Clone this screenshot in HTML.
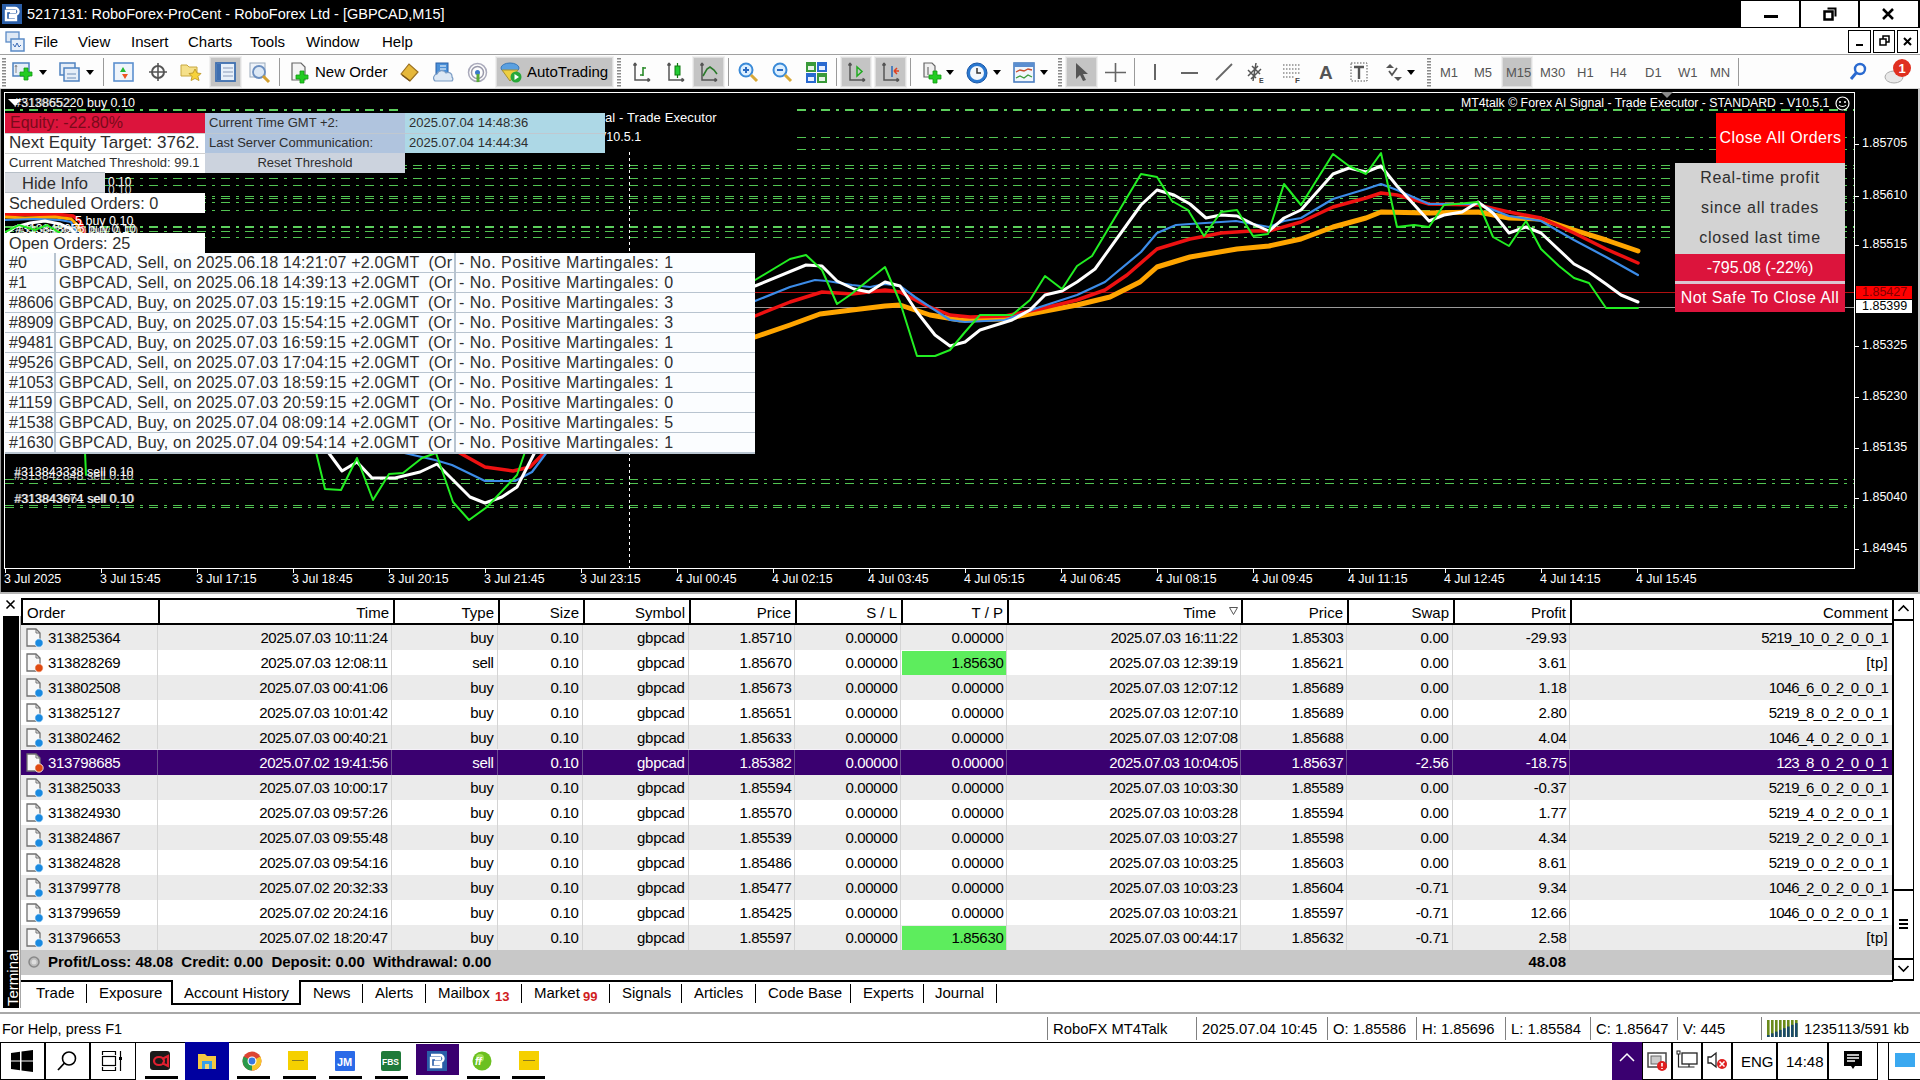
<!DOCTYPE html><html><head><meta charset="utf-8"><style>
*{margin:0;padding:0;box-sizing:border-box}
html,body{width:1920px;height:1080px;overflow:hidden;background:#fff;font-family:"Liberation Sans", sans-serif;}
.a{position:absolute}
.t{position:absolute;white-space:pre;line-height:1}
.r{text-align:right}
.c{text-align:center}
</style></head><body>
<div class="a" style="left:0px;top:0px;width:1920px;height:28px;background:#000;"></div><svg class="a" style="left:2px;top:4px" width="20" height="20" viewBox="0 0 20 20"><rect width="20" height="20" fill="#2a5ea8"/><path d="M4 4h9a3.5 3.5 0 0 1 0 7h-5v2h6v3H4V7h9v1H8" fill="none" stroke="#fff" stroke-width="2.4"/></svg><div class="t" style="left:27px;top:7px;font-size:14.5px;color:#fff;">5217131: RoboForex-ProCent - RoboForex Ltd - [GBPCAD,M15]</div><div class="a" style="left:1741px;top:1px;width:58px;height:26px;background:#fff;"></div><div class="a" style="left:1801px;top:1px;width:57px;height:26px;background:#fff;"></div><div class="a" style="left:1860px;top:1px;width:58px;height:26px;background:#fff;"></div><div class="a" style="left:1764px;top:15px;width:14px;height:3px;background:#000;"></div><svg class="a" style="left:1823px;top:7px" width="14" height="14"><rect x="1.5" y="4.5" width="8" height="8" fill="none" stroke="#000" stroke-width="2.5"/><path d="M4.5 1.5h8v8" fill="none" stroke="#000" stroke-width="2"/></svg><svg class="a" style="left:1881px;top:7px" width="14" height="14"><path d="M2 2L12 12M12 2L2 12" stroke="#000" stroke-width="2.5"/></svg><div class="a" style="left:0px;top:28px;width:1920px;height:26px;background:#fff;"></div><div class="a" style="left:0px;top:54px;width:1920px;height:1px;background:#a0a0a0;"></div><svg class="a" style="left:5px;top:31px" width="22" height="22"><rect x="1" y="1" width="13" height="10" fill="#dfe9f5" stroke="#5a8ac6" stroke-width="1.3"/><rect x="6" y="8" width="13" height="12" fill="#e8f0fa" stroke="#5a8ac6" stroke-width="1.5"/><path d="M8 13l2 3 2-4 2 4 2-2" fill="none" stroke="#3a6ab6" stroke-width="1"/></svg><div class="t" style="left:34px;top:34px;font-size:15px;color:#000;">File</div><div class="t" style="left:78px;top:34px;font-size:15px;color:#000;">View</div><div class="t" style="left:131px;top:34px;font-size:15px;color:#000;">Insert</div><div class="t" style="left:188px;top:34px;font-size:15px;color:#000;">Charts</div><div class="t" style="left:250px;top:34px;font-size:15px;color:#000;">Tools</div><div class="t" style="left:306px;top:34px;font-size:15px;color:#000;">Window</div><div class="t" style="left:382px;top:34px;font-size:15px;color:#000;">Help</div><div class="a" style="left:1848px;top:30px;width:23px;height:23px;background:#fff;border:1px solid #000;"></div><div class="a" style="left:1873px;top:30px;width:22px;height:23px;background:#fff;border:1px solid #000;"></div><div class="a" style="left:1897px;top:30px;width:21px;height:23px;background:#fff;border:1px solid #000;"></div><div class="a" style="left:1856px;top:44px;width:7px;height:2px;background:#000;"></div><svg class="a" style="left:1879px;top:35px" width="12" height="12"><rect x="1" y="4" width="6" height="6" fill="none" stroke="#000" stroke-width="1.5"/><path d="M4 4V1h6v6H7" fill="none" stroke="#000" stroke-width="1.5"/></svg><svg class="a" style="left:1902px;top:36px" width="12" height="12"><path d="M2 2L9 9M9 2L2 9" stroke="#000" stroke-width="2"/></svg><div class="a" style="left:0px;top:55px;width:1920px;height:33px;background:#fdfdfd;"></div><div class="a" style="left:0px;top:88px;width:1920px;height:1px;background:#d8d8d8;"></div><svg class="a" style="left:2px;top:58px" width="4" height="29" viewBox="0 0 4 29"><rect x="0" y="0" width="4" height="1.5" fill="#8a8a8a"/><rect x="0" y="3" width="4" height="1.5" fill="#8a8a8a"/><rect x="0" y="6" width="4" height="1.5" fill="#8a8a8a"/><rect x="0" y="9" width="4" height="1.5" fill="#8a8a8a"/><rect x="0" y="12" width="4" height="1.5" fill="#8a8a8a"/><rect x="0" y="15" width="4" height="1.5" fill="#8a8a8a"/><rect x="0" y="18" width="4" height="1.5" fill="#8a8a8a"/><rect x="0" y="21" width="4" height="1.5" fill="#8a8a8a"/><rect x="0" y="24" width="4" height="1.5" fill="#8a8a8a"/><rect x="0" y="27" width="4" height="1.5" fill="#8a8a8a"/></svg><svg class="a" style="left:12px;top:62px" width="22" height="20" viewBox="0 0 22 20"><rect x="1" y="1" width="16" height="13" fill="#e6eef8" stroke="#4f82c0" stroke-width="1.5"/><path d="M4 4v7M3 5l1-2 1 2" stroke="#888" stroke-width="1" fill="none"/><path d="M12 6h4v4h4v4h-4v4h-4v-4H8v-4h4z" fill="#22cc22" stroke="#119911" stroke-width="0.8"/></svg><svg class="a" style="left:39px;top:70px" width="8" height="5" viewBox="0 0 8 5"><path d="M0 0h8L4 5z" fill="#000"/></svg><svg class="a" style="left:59px;top:62px" width="22" height="20" viewBox="0 0 22 20"><rect x="1" y="1" width="15" height="12" fill="#e6eef8" stroke="#4f82c0" stroke-width="1.5"/><rect x="5" y="6" width="15" height="13" fill="#e6eef8" stroke="#4f82c0" stroke-width="1.5"/><path d="M8 12h9M8 16h9" stroke="#6c8db8" stroke-width="1.2"/></svg><svg class="a" style="left:86px;top:70px" width="8" height="5" viewBox="0 0 8 5"><path d="M0 0h8L4 5z" fill="#000"/></svg><div class="a" style="left:103px;top:58px;width:1px;height:28px;background:#9a9a9a;"></div><svg class="a" style="left:113px;top:62px" width="21" height="20" viewBox="0 0 21 20"><rect x="1" y="1" width="19" height="18" fill="#eef4fb" stroke="#5b8fcf" stroke-width="1.6"/><path d="M7 10l3-5 3 5z" fill="#22bb33"/><path d="M9 12l3 5 3-5z" fill="#ee5522"/></svg><svg class="a" style="left:148px;top:62px" width="20" height="20" viewBox="0 0 20 20"><circle cx="10" cy="10" r="6" fill="none" stroke="#555" stroke-width="2"/><path d="M10 1v18M1 10h18" stroke="#555" stroke-width="1.6"/></svg><svg class="a" style="left:180px;top:62px" width="23" height="20" viewBox="0 0 23 20"><path d="M1 3h6l2 2h8v9H1z" fill="#f5e08a" stroke="#c8a840" stroke-width="1"/><path d="M15 7l2 4 4 .5-3 3 1 4-4-2-4 2 1-4-3-3 4-.5z" fill="#f7d23a" stroke="#b89020" stroke-width="0.8"/></svg><div class="a" style="left:210px;top:57px;width:31px;height:30px;background:#c4c4c4;border:1px solid #dedede;outline:1px solid #f0f0f0;"></div><svg class="a" style="left:215px;top:62px" width="21" height="20" viewBox="0 0 21 20"><rect x="1" y="1" width="19" height="18" fill="#e8f0fa" stroke="#3f6fb0" stroke-width="1.8"/><rect x="2" y="2" width="4" height="16" fill="#3f6fb0"/><path d="M8 6h10M8 10h10M8 14h10" stroke="#8a9ab8" stroke-width="1.2"/></svg><svg class="a" style="left:249px;top:62px" width="23" height="22" viewBox="0 0 23 22"><rect x="1" y="1" width="15" height="14" fill="#eef3f9" stroke="#9ab" stroke-width="1"/><circle cx="10" cy="10" r="6" fill="#dce8f5" stroke="#6b8fc0" stroke-width="1.8"/><path d="M14 14l6 6" stroke="#d4a030" stroke-width="3"/></svg><div class="a" style="left:279px;top:58px;width:1px;height:28px;background:#9a9a9a;"></div><svg class="a" style="left:290px;top:62px" width="21" height="22" viewBox="0 0 21 22"><path d="M2 1h9l4 4v13H2z" fill="#f4f4f4" stroke="#666" stroke-width="1.2"/><path d="M10 9h4v4h4v4h-4v4h-4v-4H6v-4h4z" fill="#22cc22" stroke="#119911" stroke-width="0.8"/></svg><div class="t" style="left:315px;top:64px;font-size:15px;color:#000;">New Order</div><svg class="a" style="left:399px;top:62px" width="21" height="20" viewBox="0 0 21 20"><path d="M2 12l8-10 9 8-8 9z" fill="#e6b83a" stroke="#9a7020" stroke-width="1.2"/><path d="M3 13l8 6" stroke="#7a5518" stroke-width="1.5"/></svg><svg class="a" style="left:433px;top:62px" width="21" height="20" viewBox="0 0 21 20"><rect x="3" y="1" width="12" height="12" fill="#4a90d8" stroke="#2a60a8"/><path d="M7 4h6M7 7h6" stroke="#fff" stroke-width="1.2"/><path d="M2 19a4 4 0 0 1 2-7 5 5 0 0 1 9-1 4 4 0 0 1 6 4 3 3 0 0 1 0 4z" fill="#dde8f4" stroke="#7a9cc4" stroke-width="1.2"/></svg><svg class="a" style="left:467px;top:62px" width="21" height="21" viewBox="0 0 21 21"><circle cx="10.5" cy="10.5" r="9" fill="none" stroke="#aab" stroke-width="1.5"/><circle cx="10.5" cy="10.5" r="6" fill="none" stroke="#99a" stroke-width="1.5"/><circle cx="10.5" cy="10.5" r="2.5" fill="#3a7ac8"/><path d="M11 12v8" stroke="#5aaa3a" stroke-width="3"/></svg><div class="a" style="left:496px;top:57px;width:117px;height:30px;background:#c4c4c4;border:1px solid #dedede;outline:1px solid #f0f0f0;"></div><svg class="a" style="left:500px;top:62px" width="23" height="21" viewBox="0 0 23 21"><ellipse cx="10" cy="6" rx="9" ry="5" fill="#5aa0e0" stroke="#3a78b8"/><path d="M2 8l8 11 8-11z" fill="#eecf40" stroke="#a89030"/><circle cx="16" cy="15" r="5.5" fill="#28a838"/><path d="M14.5 12v6l4.5-3z" fill="#fff"/></svg><div class="t" style="left:527px;top:64px;font-size:15px;color:#000;">AutoTrading</div><svg class="a" style="left:617px;top:58px" width="4" height="29" viewBox="0 0 4 29"><rect x="0" y="0" width="4" height="1.5" fill="#8a8a8a"/><rect x="0" y="3" width="4" height="1.5" fill="#8a8a8a"/><rect x="0" y="6" width="4" height="1.5" fill="#8a8a8a"/><rect x="0" y="9" width="4" height="1.5" fill="#8a8a8a"/><rect x="0" y="12" width="4" height="1.5" fill="#8a8a8a"/><rect x="0" y="15" width="4" height="1.5" fill="#8a8a8a"/><rect x="0" y="18" width="4" height="1.5" fill="#8a8a8a"/><rect x="0" y="21" width="4" height="1.5" fill="#8a8a8a"/><rect x="0" y="24" width="4" height="1.5" fill="#8a8a8a"/><rect x="0" y="27" width="4" height="1.5" fill="#8a8a8a"/></svg><svg class="a" style="left:633px;top:62px" width="18" height="20" viewBox="0 0 18 20"><path d="M2 1v17h15M2 1l-1.5 2.5M2 1l1.5 2.5M17 18l-2.5-1.5M17 18l-2.5 1.5" stroke="#555" stroke-width="1.5" fill="none"/><path d="M10 5v9M10 6h3M7 13h3" stroke="#2a8a2a" stroke-width="1.6" fill="none"/></svg><svg class="a" style="left:667px;top:62px" width="18" height="20" viewBox="0 0 18 20"><path d="M2 1v17h15M2 1l-1.5 2.5M2 1l1.5 2.5M17 18l-2.5-1.5M17 18l-2.5 1.5" stroke="#555" stroke-width="1.5" fill="none"/><rect x="8" y="4" width="5" height="9" fill="#22cc33" stroke="#117711"/><path d="M10.5 1v3M10.5 13v3" stroke="#117711" stroke-width="1.2"/></svg><div class="a" style="left:693px;top:57px;width:31px;height:30px;background:#c4c4c4;border:1px solid #dedede;outline:1px solid #f0f0f0;"></div><svg class="a" style="left:700px;top:62px" width="18" height="20" viewBox="0 0 18 20"><path d="M2 1v17h15M2 1l-1.5 2.5M2 1l1.5 2.5M17 18l-2.5-1.5M17 18l-2.5 1.5" stroke="#555" stroke-width="1.5" fill="none"/><path d="M3 14l4-7 3-2 4 3 3 4" stroke="#2a7a2a" stroke-width="1.6" fill="none"/></svg><div class="a" style="left:728px;top:58px;width:1px;height:28px;background:#9a9a9a;"></div><svg class="a" style="left:738px;top:62px" width="21" height="22" viewBox="0 0 21 22"><circle cx="8" cy="8" r="6.5" fill="#dcefff" stroke="#3a8ad8" stroke-width="2"/><path d="M5 8h6M8 5v6" stroke="#2a6ac0" stroke-width="2"/><path d="M13 13l6 6" stroke="#d8a838" stroke-width="3"/></svg><svg class="a" style="left:772px;top:62px" width="21" height="22" viewBox="0 0 21 22"><circle cx="8" cy="8" r="6.5" fill="#dcefff" stroke="#3a8ad8" stroke-width="2"/><path d="M5 8h6" stroke="#2a6ac0" stroke-width="2"/><path d="M13 13l6 6" stroke="#d8a838" stroke-width="3"/></svg><svg class="a" style="left:806px;top:62px" width="21" height="21" viewBox="0 0 21 21"><rect x="0" y="0" width="10" height="10" fill="#3a9a3a"/><rect x="11" y="0" width="10" height="10" fill="#2a6ad0"/><rect x="0" y="11" width="10" height="10" fill="#2a6ad0"/><rect x="11" y="11" width="10" height="10" fill="#3a9a3a"/><rect x="2" y="4" width="6" height="4" fill="#e8f4e8"/><rect x="13" y="4" width="6" height="4" fill="#e8f0ff"/><rect x="2" y="15" width="6" height="4" fill="#e8f0ff"/><rect x="13" y="15" width="6" height="4" fill="#e8f4e8"/></svg><div class="a" style="left:836px;top:58px;width:1px;height:28px;background:#9a9a9a;"></div><div class="a" style="left:841px;top:57px;width:30px;height:30px;background:#c4c4c4;border:1px solid #dedede;outline:1px solid #f0f0f0;"></div><svg class="a" style="left:848px;top:62px" width="18" height="20" viewBox="0 0 18 20"><path d="M2 1v17h15M2 1l-1.5 2.5M2 1l1.5 2.5M17 18l-2.5-1.5M17 18l-2.5 1.5" stroke="#555" stroke-width="1.5" fill="none"/><path d="M9 5v9l5-4.5z" fill="none" stroke="#22aa22" stroke-width="1.5"/></svg><div class="a" style="left:875px;top:57px;width:31px;height:30px;background:#c4c4c4;border:1px solid #dedede;outline:1px solid #f0f0f0;"></div><svg class="a" style="left:882px;top:62px" width="18" height="20" viewBox="0 0 18 20"><path d="M2 1v17h15M2 1l-1.5 2.5M2 1l1.5 2.5M17 18l-2.5-1.5M17 18l-2.5 1.5" stroke="#555" stroke-width="1.5" fill="none"/><path d="M10 4v11" stroke="#2a6ab8" stroke-width="1.5"/><path d="M17 9h-5M12 9l3-3M12 9l3 3" stroke="#e04020" stroke-width="1.5" fill="none"/></svg><div class="a" style="left:910px;top:58px;width:1px;height:28px;background:#9a9a9a;"></div><svg class="a" style="left:921px;top:62px" width="22" height="23" viewBox="0 0 22 23"><path d="M3 1h8l3 3v11H3z" fill="#f0f0f0" stroke="#666" stroke-width="1.2"/><path d="M7 5v8" stroke="#555"/><path d="M12 9h4v4h4v4h-4v4h-4v-4H8v-4h4z" fill="#22cc22" stroke="#119911" stroke-width="0.8"/></svg><svg class="a" style="left:946px;top:70px" width="8" height="5" viewBox="0 0 8 5"><path d="M0 0h8L4 5z" fill="#000"/></svg><svg class="a" style="left:966px;top:62px" width="22" height="22" viewBox="0 0 22 22"><circle cx="11" cy="11" r="10" fill="#2a78d0" stroke="#1a58a8"/><circle cx="11" cy="11" r="7" fill="#f4f8fc"/><path d="M11 6v5h4" stroke="#333" stroke-width="1.5" fill="none"/></svg><svg class="a" style="left:993px;top:70px" width="8" height="5" viewBox="0 0 8 5"><path d="M0 0h8L4 5z" fill="#000"/></svg><svg class="a" style="left:1013px;top:62px" width="22" height="21" viewBox="0 0 22 21"><rect x="1" y="1" width="20" height="19" fill="#f0f6fc" stroke="#4a7ec0" stroke-width="1.6"/><rect x="1" y="1" width="20" height="4" fill="#5a8ed0"/><path d="M3 10l4-2 4 1 4-2 4 1" stroke="#c84a2a" stroke-width="1.3" fill="none"/><path d="M3 16l4-2 4 2 4-3 4 2" stroke="#3a9a3a" stroke-width="1.3" fill="none"/></svg><svg class="a" style="left:1040px;top:70px" width="8" height="5" viewBox="0 0 8 5"><path d="M0 0h8L4 5z" fill="#000"/></svg><svg class="a" style="left:1058px;top:58px" width="4" height="29" viewBox="0 0 4 29"><rect x="0" y="0" width="4" height="1.5" fill="#8a8a8a"/><rect x="0" y="3" width="4" height="1.5" fill="#8a8a8a"/><rect x="0" y="6" width="4" height="1.5" fill="#8a8a8a"/><rect x="0" y="9" width="4" height="1.5" fill="#8a8a8a"/><rect x="0" y="12" width="4" height="1.5" fill="#8a8a8a"/><rect x="0" y="15" width="4" height="1.5" fill="#8a8a8a"/><rect x="0" y="18" width="4" height="1.5" fill="#8a8a8a"/><rect x="0" y="21" width="4" height="1.5" fill="#8a8a8a"/><rect x="0" y="24" width="4" height="1.5" fill="#8a8a8a"/><rect x="0" y="27" width="4" height="1.5" fill="#8a8a8a"/></svg><div class="a" style="left:1066px;top:57px;width:31px;height:30px;background:#c4c4c4;border:1px solid #dedede;outline:1px solid #f0f0f0;"></div><svg class="a" style="left:1074px;top:62px" width="14" height="20" viewBox="0 0 14 20"><path d="M2 1v16l4-4 3 6 3-1-3-6h5z" fill="#555"/></svg><svg class="a" style="left:1105px;top:63px" width="21" height="19" viewBox="0 0 21 19"><path d="M10.5 0v19M0 9.5h21" stroke="#666" stroke-width="1.6"/></svg><div class="a" style="left:1134px;top:58px;width:1px;height:28px;background:#9a9a9a;"></div><div class="a" style="left:1154px;top:64px;width:2px;height:16px;background:#666;"></div><div class="a" style="left:1181px;top:72px;width:17px;height:2px;background:#666;"></div><svg class="a" style="left:1215px;top:63px" width="18" height="18" viewBox="0 0 18 18"><path d="M1 17L17 1" stroke="#666" stroke-width="1.8"/></svg><svg class="a" style="left:1246px;top:62px" width="20" height="22" viewBox="0 0 20 22"><path d="M2 14l10-10M5 17l10-10M2 8l8 8M6 4l8 8M10 1l-3 18" stroke="#555" stroke-width="1.5" fill="none"/><text x="13" y="21" font-size="7" font-weight="bold" fill="#444" font-family="Liberation Sans">E</text></svg><svg class="a" style="left:1282px;top:62px" width="20" height="22" viewBox="0 0 20 22"><path d="M1 3h17M1 7h17M1 11h17M1 15h12" stroke="#555" stroke-width="1.2" stroke-dasharray="1.5 1.5"/><text x="13" y="21" font-size="8" font-weight="bold" fill="#444" font-family="Liberation Sans">F</text></svg><div class="t" style="left:1319px;top:63px;font-size:19px;color:#555;font-weight:bold;">A</div><svg class="a" style="left:1350px;top:62px" width="18" height="21" viewBox="0 0 18 21"><rect x="1" y="1" width="16" height="18" fill="none" stroke="#555" stroke-dasharray="1.5 1.5"/><path d="M4 5h10M9 5v12" stroke="#555" stroke-width="2.4"/></svg><svg class="a" style="left:1385px;top:62px" width="18" height="21" viewBox="0 0 18 21"><path d="M1 6l4-4 4 4z M9 15l4 4 4-4z" fill="#555"/><path d="M4 9l3 4 5-7" stroke="#555" stroke-width="1.8" fill="none"/></svg><svg class="a" style="left:1407px;top:70px" width="8" height="5" viewBox="0 0 8 5"><path d="M0 0h8L4 5z" fill="#000"/></svg><svg class="a" style="left:1427px;top:58px" width="4" height="29" viewBox="0 0 4 29"><rect x="0" y="0" width="4" height="1.5" fill="#8a8a8a"/><rect x="0" y="3" width="4" height="1.5" fill="#8a8a8a"/><rect x="0" y="6" width="4" height="1.5" fill="#8a8a8a"/><rect x="0" y="9" width="4" height="1.5" fill="#8a8a8a"/><rect x="0" y="12" width="4" height="1.5" fill="#8a8a8a"/><rect x="0" y="15" width="4" height="1.5" fill="#8a8a8a"/><rect x="0" y="18" width="4" height="1.5" fill="#8a8a8a"/><rect x="0" y="21" width="4" height="1.5" fill="#8a8a8a"/><rect x="0" y="24" width="4" height="1.5" fill="#8a8a8a"/><rect x="0" y="27" width="4" height="1.5" fill="#8a8a8a"/></svg><div class="a" style="left:1502px;top:57px;width:30px;height:30px;background:#c4c4c4;border:1px solid #dedede;outline:1px solid #f0f0f0;"></div><div class="t" style="left:1440px;top:66px;font-size:13px;color:#555;">M1</div><div class="t" style="left:1474px;top:66px;font-size:13px;color:#555;">M5</div><div class="t" style="left:1506px;top:66px;font-size:13px;color:#555;">M15</div><div class="t" style="left:1540px;top:66px;font-size:13px;color:#555;">M30</div><div class="t" style="left:1577px;top:66px;font-size:13px;color:#555;">H1</div><div class="t" style="left:1610px;top:66px;font-size:13px;color:#555;">H4</div><div class="t" style="left:1645px;top:66px;font-size:13px;color:#555;">D1</div><div class="t" style="left:1678px;top:66px;font-size:13px;color:#555;">W1</div><div class="t" style="left:1710px;top:66px;font-size:13px;color:#555;">MN</div><div class="a" style="left:1738px;top:58px;width:1px;height:28px;background:#9a9a9a;"></div><svg class="a" style="left:1849px;top:62px" width="18" height="20" viewBox="0 0 18 20"><circle cx="11" cy="7" r="5" fill="none" stroke="#2a6ad0" stroke-width="2.4"/><path d="M7.5 10.5L2 17" stroke="#2a6ad0" stroke-width="3"/></svg><svg class="a" style="left:1883px;top:58px" width="30" height="27" viewBox="0 0 30 27"><ellipse cx="11" cy="19" rx="9" ry="6" fill="#e8e8e8" stroke="#aaa"/><circle cx="19" cy="10" r="9" fill="#e03020"/><text x="15.5" y="15" font-size="13" font-weight="bold" fill="#fff" font-family="Liberation Sans">1</text></svg><div class="a" style="left:0px;top:89px;width:1920px;height:503px;background:#000;"></div><div class="a" style="left:0px;top:89px;width:1px;height:503px;background:#9a9a9a;"></div><div class="a" style="left:1918px;top:89px;width:2px;height:503px;background:#c8c8c8;"></div><div class="a" style="left:0px;top:592px;width:1920px;height:2px;background:#b4b4b4;"></div><div class="a" style="left:4px;top:92px;width:1851px;height:1px;background:#fff;"></div><div class="a" style="left:4px;top:92px;width:1px;height:477px;background:#fff;"></div><div class="a" style="left:1854px;top:92px;width:1px;height:477px;background:#fff;"></div><div class="a" style="left:4px;top:568px;width:1851px;height:1px;background:#fff;"></div><svg class="a" style="left:1661px;top:92px" width="12" height="6" viewBox="0 0 12 6"><path d="M0 0h12L6 6z" fill="#8a8a8a"/></svg><svg class="a" style="left:0;top:0" width="1920" height="600" viewBox="0 0 1920 600"><defs><clipPath id="c797_1854"><rect x="797" y="0" width="1057" height="600"/></clipPath><clipPath id="c5_1854"><rect x="5" y="0" width="1849" height="600"/></clipPath><clipPath id="c5_398"><rect x="5" y="0" width="393" height="600"/></clipPath><clipPath id="frame"><rect x="5" y="93" width="1849" height="475"/></clipPath></defs><g clip-path="url(#frame)"><line x1="5" y1="110.0" x2="398" y2="110.0" stroke="#5ccf5c" stroke-width="2" stroke-dasharray="9 6 3 6" clip-path="url(#c5_398)"/><line x1="797" y1="110.0" x2="1854" y2="110.0" stroke="#5ccf5c" stroke-width="2" stroke-dasharray="9 6 3 6" clip-path="url(#c797_1854)"/><line x1="797" y1="137.5" x2="1854" y2="137.5" stroke="#52c452" stroke-width="1" stroke-dasharray="9 6 3 6" clip-path="url(#c797_1854)"/><line x1="797" y1="149.5" x2="1854" y2="149.5" stroke="#52c452" stroke-width="1" stroke-dasharray="9 6 3 6" clip-path="url(#c797_1854)"/><line x1="5" y1="165.5" x2="1854" y2="165.5" stroke="#52c452" stroke-width="1" stroke-dasharray="9 6 3 6" clip-path="url(#c5_1854)"/><line x1="5" y1="168.5" x2="1854" y2="168.5" stroke="#52c452" stroke-width="1" stroke-dasharray="9 6 3 6" clip-path="url(#c5_1854)"/><line x1="5" y1="178.5" x2="1854" y2="178.5" stroke="#52c452" stroke-width="1" stroke-dasharray="9 6 3 6" clip-path="url(#c5_1854)"/><line x1="5" y1="185.5" x2="1854" y2="185.5" stroke="#52c452" stroke-width="1" stroke-dasharray="9 6 3 6" clip-path="url(#c5_1854)"/><line x1="5" y1="196.5" x2="1854" y2="196.5" stroke="#52c452" stroke-width="1" stroke-dasharray="9 6 3 6" clip-path="url(#c5_1854)"/><line x1="5" y1="198.5" x2="1854" y2="198.5" stroke="#52c452" stroke-width="1" stroke-dasharray="9 6 3 6" clip-path="url(#c5_1854)"/><line x1="5" y1="202.5" x2="1854" y2="202.5" stroke="#52c452" stroke-width="1" stroke-dasharray="9 6 3 6" clip-path="url(#c5_1854)"/><line x1="5" y1="210.5" x2="1854" y2="210.5" stroke="#52c452" stroke-width="1" stroke-dasharray="9 6 3 6" clip-path="url(#c5_1854)"/><line x1="5" y1="231.5" x2="1854" y2="231.5" stroke="#52c452" stroke-width="1" stroke-dasharray="9 6 3 6" clip-path="url(#c5_1854)"/><line x1="5" y1="237.5" x2="1854" y2="237.5" stroke="#52c452" stroke-width="1" stroke-dasharray="9 6 3 6" clip-path="url(#c5_1854)"/><line x1="5" y1="227.0" x2="1854" y2="227.0" stroke="#5ccf5c" stroke-width="2" stroke-dasharray="9 6 3 6" clip-path="url(#c5_1854)"/><line x1="5" y1="479.5" x2="1854" y2="479.5" stroke="#52c452" stroke-width="1" stroke-dasharray="9 6 3 6" clip-path="url(#c5_1854)"/><line x1="5" y1="483.5" x2="1854" y2="483.5" stroke="#52c452" stroke-width="1" stroke-dasharray="9 6 3 6" clip-path="url(#c5_1854)"/><line x1="5" y1="505.5" x2="1854" y2="505.5" stroke="#52c452" stroke-width="1" stroke-dasharray="9 6 3 6" clip-path="url(#c5_1854)"/><line x1="5" y1="507.5" x2="1854" y2="507.5" stroke="#52c452" stroke-width="1" stroke-dasharray="9 6 3 6" clip-path="url(#c5_1854)"/><line x1="5" y1="292.5" x2="1854" y2="292.5" stroke="#b01010" stroke-width="1"/><line x1="5" y1="307.5" x2="1854" y2="307.5" stroke="#9a9a9a" stroke-width="1"/><line x1="629.5" y1="152" x2="629.5" y2="568" stroke="#fff" stroke-width="1" stroke-dasharray="3 3"/><polyline points="755,337 790,325 820,314 852,310 885,306 900,305 930,315 960,320 1005,319 1040,312 1077,305 1110,297 1140,282 1157,267 1190,257 1237,249 1269,246 1301,239 1333,227 1366,218 1381,212 1429,213 1478,212 1509,218 1541,219 1574,230 1606,240 1638,251" fill="none" stroke="#ffa500" stroke-width="5" stroke-linejoin="round" stroke-linecap="round"/><polyline points="755,316 790,302 822,292 852,294 885,290 900,292 925,305 950,315 970,317 1005,316 1040,309 1077,300 1105,290 1127,275 1157,249 1190,239 1206,236 1221,233 1251,231 1269,231 1301,222 1333,207 1366,198 1381,193 1397,195 1429,204 1478,205 1509,212 1541,218 1574,233 1606,249 1638,263" fill="none" stroke="#ee1111" stroke-width="3.5" stroke-linejoin="round" stroke-linecap="round"/><polyline points="458,452 485,467 513,471 530,467 545,452" fill="none" stroke="#ee1111" stroke-width="3.5" stroke-linejoin="round" stroke-linecap="round"/><polyline points="755,301 790,287 815,280 827,281 852,285 870,287 885,284 900,286 915,297 950,320 965,322 1005,320 1040,307 1077,295 1105,282 1141,252 1157,233 1176,225 1190,224 1236,221 1269,227 1284,221 1301,218 1333,199 1366,189 1381,184 1397,190 1429,204 1478,204 1509,216 1541,221 1574,240 1606,257 1638,275" fill="none" stroke="#3c8ce8" stroke-width="2.2" stroke-linejoin="round" stroke-linecap="round"/><polyline points="400,452 435,460 452,465 485,481 515,481 532,472 547,452" fill="none" stroke="#3c8ce8" stroke-width="2.2" stroke-linejoin="round" stroke-linecap="round"/><polyline points="755,286 806,265 822,266 837,281 854,289 869,292 885,282 900,286 917,312 935,335 950,346 965,342 980,330 1012,320 1030,310 1045,295 1062,291 1077,282 1095,269 1141,205 1157,190 1174,195 1190,204 1206,218 1221,215 1237,216 1253,224 1269,231 1284,218 1301,210 1333,174 1349,168 1366,172 1381,166 1397,186 1429,221 1444,215 1462,212 1478,202 1493,213 1509,233 1526,227 1541,233 1574,264 1589,272 1606,284 1621,295 1638,302" fill="none" stroke="#ffffff" stroke-width="3" stroke-linejoin="round" stroke-linecap="round"/><polyline points="328,452 342,471 357,462 372,478 395,478 420,472 437,464 470,497 485,503 502,497 517,487 535,452" fill="none" stroke="#ffffff" stroke-width="3" stroke-linejoin="round" stroke-linecap="round"/><polyline points="755,280 790,259 806,255 822,270 837,304 850,295 885,267 900,302 917,356 935,356 950,350 965,332 980,315 1012,315 1030,300 1045,276 1062,289 1077,266 1092,256 1141,174 1157,177 1172,201 1188,210 1204,236 1221,212 1237,210 1253,236 1268,234 1284,184 1301,205 1333,154 1349,166 1366,174 1381,153 1397,227 1414,225 1429,227 1444,205 1478,202 1493,237 1509,246 1526,221 1541,249 1559,266 1574,278 1589,283 1606,308 1638,308" fill="none" stroke="#22ee22" stroke-width="2" stroke-linejoin="round" stroke-linecap="round"/><polyline points="316,452 325,489 341,490 357,458 373,500 389,474 403,473 422,458 436,453 453,502 469,520 487,507 517,475 525,452" fill="none" stroke="#22ee22" stroke-width="2" stroke-linejoin="round" stroke-linecap="round"/><polyline points="85,452 86,475" fill="none" stroke="#22ee22" stroke-width="2" stroke-linejoin="round" stroke-linecap="round"/></g></svg><div class="a" style="left:1855px;top:144px;width:4px;height:1px;background:#fff;"></div><div class="t" style="left:1862px;top:137px;font-size:12.5px;color:#fff;">1.85705</div><div class="a" style="left:1855px;top:196px;width:4px;height:1px;background:#fff;"></div><div class="t" style="left:1862px;top:189px;font-size:12.5px;color:#fff;">1.85610</div><div class="a" style="left:1855px;top:245px;width:4px;height:1px;background:#fff;"></div><div class="t" style="left:1862px;top:238px;font-size:12.5px;color:#fff;">1.85515</div><div class="a" style="left:1855px;top:346px;width:4px;height:1px;background:#fff;"></div><div class="t" style="left:1862px;top:339px;font-size:12.5px;color:#fff;">1.85325</div><div class="a" style="left:1855px;top:397px;width:4px;height:1px;background:#fff;"></div><div class="t" style="left:1862px;top:390px;font-size:12.5px;color:#fff;">1.85230</div><div class="a" style="left:1855px;top:448px;width:4px;height:1px;background:#fff;"></div><div class="t" style="left:1862px;top:441px;font-size:12.5px;color:#fff;">1.85135</div><div class="a" style="left:1855px;top:498px;width:4px;height:1px;background:#fff;"></div><div class="t" style="left:1862px;top:491px;font-size:12.5px;color:#fff;">1.85040</div><div class="a" style="left:1855px;top:549px;width:4px;height:1px;background:#fff;"></div><div class="t" style="left:1862px;top:542px;font-size:12.5px;color:#fff;">1.84945</div><div class="a" style="left:1856px;top:286px;width:56px;height:13px;background:#ff0000;"></div><div class="t" style="left:1862px;top:286px;font-size:12.5px;color:#800000;">1.85427</div><div class="a" style="left:1856px;top:300px;width:56px;height:13px;background:#fff;"></div><div class="t" style="left:1862px;top:300px;font-size:12.5px;color:#000;">1.85399</div><div class="a" style="left:5px;top:569px;width:1px;height:4px;background:#fff;"></div><div class="t" style="left:4px;top:573px;font-size:12.4px;color:#fff;">3 Jul 2025</div><div class="a" style="left:101px;top:569px;width:1px;height:4px;background:#fff;"></div><div class="t" style="left:100px;top:573px;font-size:12.4px;color:#fff;">3 Jul 15:45</div><div class="a" style="left:197px;top:569px;width:1px;height:4px;background:#fff;"></div><div class="t" style="left:196px;top:573px;font-size:12.4px;color:#fff;">3 Jul 17:15</div><div class="a" style="left:293px;top:569px;width:1px;height:4px;background:#fff;"></div><div class="t" style="left:292px;top:573px;font-size:12.4px;color:#fff;">3 Jul 18:45</div><div class="a" style="left:389px;top:569px;width:1px;height:4px;background:#fff;"></div><div class="t" style="left:388px;top:573px;font-size:12.4px;color:#fff;">3 Jul 20:15</div><div class="a" style="left:485px;top:569px;width:1px;height:4px;background:#fff;"></div><div class="t" style="left:484px;top:573px;font-size:12.4px;color:#fff;">3 Jul 21:45</div><div class="a" style="left:581px;top:569px;width:1px;height:4px;background:#fff;"></div><div class="t" style="left:580px;top:573px;font-size:12.4px;color:#fff;">3 Jul 23:15</div><div class="a" style="left:677px;top:569px;width:1px;height:4px;background:#fff;"></div><div class="t" style="left:676px;top:573px;font-size:12.4px;color:#fff;">4 Jul 00:45</div><div class="a" style="left:773px;top:569px;width:1px;height:4px;background:#fff;"></div><div class="t" style="left:772px;top:573px;font-size:12.4px;color:#fff;">4 Jul 02:15</div><div class="a" style="left:869px;top:569px;width:1px;height:4px;background:#fff;"></div><div class="t" style="left:868px;top:573px;font-size:12.4px;color:#fff;">4 Jul 03:45</div><div class="a" style="left:965px;top:569px;width:1px;height:4px;background:#fff;"></div><div class="t" style="left:964px;top:573px;font-size:12.4px;color:#fff;">4 Jul 05:15</div><div class="a" style="left:1061px;top:569px;width:1px;height:4px;background:#fff;"></div><div class="t" style="left:1060px;top:573px;font-size:12.4px;color:#fff;">4 Jul 06:45</div><div class="a" style="left:1157px;top:569px;width:1px;height:4px;background:#fff;"></div><div class="t" style="left:1156px;top:573px;font-size:12.4px;color:#fff;">4 Jul 08:15</div><div class="a" style="left:1253px;top:569px;width:1px;height:4px;background:#fff;"></div><div class="t" style="left:1252px;top:573px;font-size:12.4px;color:#fff;">4 Jul 09:45</div><div class="a" style="left:1349px;top:569px;width:1px;height:4px;background:#fff;"></div><div class="t" style="left:1348px;top:573px;font-size:12.4px;color:#fff;">4 Jul 11:15</div><div class="a" style="left:1445px;top:569px;width:1px;height:4px;background:#fff;"></div><div class="t" style="left:1444px;top:573px;font-size:12.4px;color:#fff;">4 Jul 12:45</div><div class="a" style="left:1541px;top:569px;width:1px;height:4px;background:#fff;"></div><div class="t" style="left:1540px;top:573px;font-size:12.4px;color:#fff;">4 Jul 14:15</div><div class="a" style="left:1637px;top:569px;width:1px;height:4px;background:#fff;"></div><div class="t" style="left:1636px;top:573px;font-size:12.4px;color:#fff;">4 Jul 15:45</div><div class="t" style="left:1461px;top:97px;font-size:12.3px;color:#fff;">MT4talk © Forex AI Signal - Trade Executor - STANDARD - V10.5.1</div><svg class="a" style="left:1835px;top:96px" width="15" height="15" viewBox="0 0 15 15"><circle cx="7.5" cy="7.5" r="6.5" fill="none" stroke="#fff" stroke-width="1.2"/><circle cx="5" cy="6" r="1" fill="#fff"/><circle cx="10" cy="6" r="1" fill="#fff"/><path d="M4 9a4 3 0 0 0 7 0" fill="none" stroke="#fff" stroke-width="1.1"/></svg><div class="t" style="left:605px;top:111px;font-size:13px;color:#fff;letter-spacing:0.1px;">al - Trade Executor</div><div class="t" style="left:598px;top:131px;font-size:12.5px;color:#fff;">V10.5.1</div><div class="t" style="left:14px;top:466px;font-size:12.5px;color:#fff;">#313843338 sell 0.10</div><div class="t" style="left:14px;top:470px;font-size:12.5px;color:#eee;opacity:0.85;">#313842848 sell 0.10</div><div class="t" style="left:14px;top:493px;font-size:12.5px;color:#fff;">#313843674 sell 0.10</div><div class="t" style="left:15px;top:493px;font-size:12.5px;color:#eee;opacity:0.7;">#313843961 sell 0.10</div><svg class="a" style="left:8px;top:99px" width="14" height="7" viewBox="0 0 14 7"><path d="M0 0h14L7 7z" fill="#fff"/></svg><div class="t" style="left:14px;top:97px;font-size:12.5px;color:#fff;">#313865220 buy 0.10</div><div class="t" style="left:22px;top:97px;font-size:12.5px;color:#ddd;opacity:0.6;">5108552</div><div class="t" style="left:5px;top:113px;width:200px;height:20px;background:#dc143c;font-size:16px;color:#7a0a1a;line-height:20px;padding-left:5px;text-align:left;overflow:hidden;">Equity: -22.80%</div><div class="t" style="left:5px;top:133px;width:200px;height:20px;background:#fff;font-size:17px;color:#2e2e2e;line-height:20px;padding-left:4px;text-align:left;overflow:hidden;">Next Equity Target: 3762.</div><div class="t" style="left:5px;top:153px;width:200px;height:20px;background:#fff;font-size:13px;color:#2e2e2e;line-height:20px;padding-left:4px;text-align:left;overflow:hidden;">Current Matched Threshold: 99.1</div><div class="t" style="left:205px;top:113px;width:200px;height:20px;background:#b0c4de;font-size:13px;color:#2e2e2e;line-height:20px;padding-left:4px;text-align:left;overflow:hidden;">Current Time GMT +2:</div><div class="t" style="left:205px;top:133px;width:200px;height:20px;background:#b0c4de;font-size:13px;color:#2e2e2e;line-height:20px;padding-left:4px;text-align:left;overflow:hidden;">Last Server Communication:</div><div class="t" style="left:205px;top:153px;width:200px;height:20px;background:#ccd3de;font-size:13px;color:#2e2e2e;line-height:20px;padding-left:0px;text-align:center;overflow:hidden;">Reset Threshold</div><div class="t" style="left:405px;top:113px;width:200px;height:20px;background:#add8e6;font-size:13px;color:#2e2e2e;line-height:20px;padding-left:4px;text-align:left;overflow:hidden;">2025.07.04 14:48:36</div><div class="t" style="left:405px;top:133px;width:200px;height:20px;background:#add8e6;font-size:13px;color:#2e2e2e;line-height:20px;padding-left:4px;text-align:left;overflow:hidden;">2025.07.04 14:44:34</div><div class="a" style="left:205px;top:133px;width:400px;height:1px;background:#c0c8d0;"></div><div class="a" style="left:5px;top:133px;width:200px;height:1px;background:#d0d0d0;"></div><div class="a" style="left:5px;top:153px;width:200px;height:1px;background:#d0d0d0;"></div><div class="t" style="left:5px;top:173px;width:100px;height:20px;background:#d9dce2;font-size:16.5px;color:#2e2e2e;line-height:20px;padding-left:0px;text-align:center;overflow:hidden;">Hide Info</div><div class="a" style="left:5px;top:172px;width:100px;height:1px;background:#b8c0c8;"></div><div class="a" style="left:5px;top:192px;width:100px;height:1px;background:#b8c0c8;"></div><div class="t" style="left:5px;top:193px;width:200px;height:20px;background:#fff;font-size:16.3px;color:#2e2e2e;line-height:20px;padding-left:4px;text-align:left;overflow:hidden;">Scheduled Orders: 0</div><div class="t" style="left:5px;top:233px;width:200px;height:20px;background:#fff;font-size:16.3px;color:#2e2e2e;line-height:20px;padding-left:4px;text-align:left;overflow:hidden;">Open Orders: 25</div><svg class="a" style="left:5px;top:213px" width="140" height="20" viewBox="0 0 140 20"><defs><clipPath id="rb"><rect x="0" y="0" width="140" height="20"/></clipPath></defs><g clip-path="url(#rb)"><line x1="0" y1="14.5" x2="140" y2="14.5" stroke="#52c452" stroke-dasharray="9 6 3 6"/><line x1="0" y1="18.5" x2="140" y2="18.5" stroke="#52c452" stroke-dasharray="9 6 3 6"/><polyline points="0,1.5 55,1.5 68,3 75,8 80,20" fill="none" stroke="#ee1111" stroke-width="3.5"/><polyline points="0,4 20,5 50,4 66,6 72,12 76,20" fill="none" stroke="#ffa500" stroke-width="3"/><polyline points="0,7 30,6 55,7 66,9 72,20" fill="none" stroke="#3c8ce8" stroke-width="2.2"/><text x="10" y="20" font-size="12.5" fill="#fff" font-family="Liberation Sans">#313848655 buy 0.10</text><text x="12" y="22" font-size="12.5" fill="#eee" font-family="Liberation Sans" opacity="0.8">#313843920 buy 0.10</text><polyline points="2,20 10,14 25,10 40,8 55,11 66,16 70,20" fill="none" stroke="#fff" stroke-width="3"/><polyline points="0,19 14,12 30,17 42,12 55,20" fill="none" stroke="#22ee22" stroke-width="2"/><text x="70" y="12" font-size="12.5" fill="#fff" font-family="Liberation Sans">5 buy 0.10</text></g></svg><div class="t" style="left:108px;top:176px;font-size:12px;color:#fff;">0.10</div><div class="t" style="left:108px;top:184px;font-size:12px;color:#ddd;">0.10</div><div class="a" style="left:5px;top:253px;width:750px;height:20px;background:#fbfdff;"></div><div class="t" style="left:5px;top:253px;width:50px;height:20px;background:#fbfdff;font-size:16px;color:#2e2e2e;line-height:20px;padding-left:4px;text-align:left;overflow:hidden;">#0</div><div class="t" style="left:55px;top:253px;width:400px;height:20px;background:#fbfdff;font-size:16px;color:#2e2e2e;line-height:20px;padding-left:4px;text-align:left;overflow:hidden;letter-spacing:0.18px;">GBPCAD, Sell, on 2025.06.18 14:21:07 +2.0GMT  (Or</div><div class="t" style="left:455px;top:253px;width:300px;height:20px;background:#fbfdff;font-size:16px;color:#2e2e2e;line-height:20px;padding-left:4px;text-align:left;overflow:hidden;letter-spacing:0.5px;">- No. Positive Martingales: 1</div><div class="a" style="left:5px;top:272px;width:750px;height:2px;background:#b8c4d0;"></div><div class="a" style="left:54px;top:253px;width:2px;height:20px;background:#b8c4d0;"></div><div class="a" style="left:454px;top:253px;width:2px;height:20px;background:#b8c4d0;"></div><div class="a" style="left:5px;top:273px;width:750px;height:20px;background:#fbfdff;"></div><div class="t" style="left:5px;top:273px;width:50px;height:20px;background:#fbfdff;font-size:16px;color:#2e2e2e;line-height:20px;padding-left:4px;text-align:left;overflow:hidden;">#1</div><div class="t" style="left:55px;top:273px;width:400px;height:20px;background:#fbfdff;font-size:16px;color:#2e2e2e;line-height:20px;padding-left:4px;text-align:left;overflow:hidden;letter-spacing:0.18px;">GBPCAD, Sell, on 2025.06.18 14:39:13 +2.0GMT  (Or</div><div class="t" style="left:455px;top:273px;width:300px;height:20px;background:#fbfdff;font-size:16px;color:#2e2e2e;line-height:20px;padding-left:4px;text-align:left;overflow:hidden;letter-spacing:0.5px;">- No. Positive Martingales: 0</div><div class="a" style="left:5px;top:292px;width:750px;height:2px;background:#b8c4d0;"></div><div class="a" style="left:54px;top:273px;width:2px;height:20px;background:#b8c4d0;"></div><div class="a" style="left:454px;top:273px;width:2px;height:20px;background:#b8c4d0;"></div><div class="a" style="left:5px;top:293px;width:750px;height:20px;background:#fbfdff;"></div><div class="t" style="left:5px;top:293px;width:50px;height:20px;background:#fbfdff;font-size:16px;color:#2e2e2e;line-height:20px;padding-left:4px;text-align:left;overflow:hidden;">#8606</div><div class="t" style="left:55px;top:293px;width:400px;height:20px;background:#fbfdff;font-size:16px;color:#2e2e2e;line-height:20px;padding-left:4px;text-align:left;overflow:hidden;letter-spacing:0.18px;">GBPCAD, Buy, on 2025.07.03 15:19:15 +2.0GMT  (Or</div><div class="t" style="left:455px;top:293px;width:300px;height:20px;background:#fbfdff;font-size:16px;color:#2e2e2e;line-height:20px;padding-left:4px;text-align:left;overflow:hidden;letter-spacing:0.5px;">- No. Positive Martingales: 3</div><div class="a" style="left:5px;top:312px;width:750px;height:2px;background:#b8c4d0;"></div><div class="a" style="left:54px;top:293px;width:2px;height:20px;background:#b8c4d0;"></div><div class="a" style="left:454px;top:293px;width:2px;height:20px;background:#b8c4d0;"></div><div class="a" style="left:5px;top:313px;width:750px;height:20px;background:#fbfdff;"></div><div class="t" style="left:5px;top:313px;width:50px;height:20px;background:#fbfdff;font-size:16px;color:#2e2e2e;line-height:20px;padding-left:4px;text-align:left;overflow:hidden;">#8909</div><div class="t" style="left:55px;top:313px;width:400px;height:20px;background:#fbfdff;font-size:16px;color:#2e2e2e;line-height:20px;padding-left:4px;text-align:left;overflow:hidden;letter-spacing:0.18px;">GBPCAD, Buy, on 2025.07.03 15:54:15 +2.0GMT  (Or</div><div class="t" style="left:455px;top:313px;width:300px;height:20px;background:#fbfdff;font-size:16px;color:#2e2e2e;line-height:20px;padding-left:4px;text-align:left;overflow:hidden;letter-spacing:0.5px;">- No. Positive Martingales: 3</div><div class="a" style="left:5px;top:332px;width:750px;height:2px;background:#b8c4d0;"></div><div class="a" style="left:54px;top:313px;width:2px;height:20px;background:#b8c4d0;"></div><div class="a" style="left:454px;top:313px;width:2px;height:20px;background:#b8c4d0;"></div><div class="a" style="left:5px;top:333px;width:750px;height:20px;background:#fbfdff;"></div><div class="t" style="left:5px;top:333px;width:50px;height:20px;background:#fbfdff;font-size:16px;color:#2e2e2e;line-height:20px;padding-left:4px;text-align:left;overflow:hidden;">#9481</div><div class="t" style="left:55px;top:333px;width:400px;height:20px;background:#fbfdff;font-size:16px;color:#2e2e2e;line-height:20px;padding-left:4px;text-align:left;overflow:hidden;letter-spacing:0.18px;">GBPCAD, Buy, on 2025.07.03 16:59:15 +2.0GMT  (Or</div><div class="t" style="left:455px;top:333px;width:300px;height:20px;background:#fbfdff;font-size:16px;color:#2e2e2e;line-height:20px;padding-left:4px;text-align:left;overflow:hidden;letter-spacing:0.5px;">- No. Positive Martingales: 1</div><div class="a" style="left:5px;top:352px;width:750px;height:2px;background:#b8c4d0;"></div><div class="a" style="left:54px;top:333px;width:2px;height:20px;background:#b8c4d0;"></div><div class="a" style="left:454px;top:333px;width:2px;height:20px;background:#b8c4d0;"></div><div class="a" style="left:5px;top:353px;width:750px;height:20px;background:#fbfdff;"></div><div class="t" style="left:5px;top:353px;width:50px;height:20px;background:#fbfdff;font-size:16px;color:#2e2e2e;line-height:20px;padding-left:4px;text-align:left;overflow:hidden;">#9526</div><div class="t" style="left:55px;top:353px;width:400px;height:20px;background:#fbfdff;font-size:16px;color:#2e2e2e;line-height:20px;padding-left:4px;text-align:left;overflow:hidden;letter-spacing:0.18px;">GBPCAD, Sell, on 2025.07.03 17:04:15 +2.0GMT  (Or</div><div class="t" style="left:455px;top:353px;width:300px;height:20px;background:#fbfdff;font-size:16px;color:#2e2e2e;line-height:20px;padding-left:4px;text-align:left;overflow:hidden;letter-spacing:0.5px;">- No. Positive Martingales: 0</div><div class="a" style="left:5px;top:372px;width:750px;height:2px;background:#b8c4d0;"></div><div class="a" style="left:54px;top:353px;width:2px;height:20px;background:#b8c4d0;"></div><div class="a" style="left:454px;top:353px;width:2px;height:20px;background:#b8c4d0;"></div><div class="a" style="left:5px;top:373px;width:750px;height:20px;background:#fbfdff;"></div><div class="t" style="left:5px;top:373px;width:50px;height:20px;background:#fbfdff;font-size:16px;color:#2e2e2e;line-height:20px;padding-left:4px;text-align:left;overflow:hidden;">#1053</div><div class="t" style="left:55px;top:373px;width:400px;height:20px;background:#fbfdff;font-size:16px;color:#2e2e2e;line-height:20px;padding-left:4px;text-align:left;overflow:hidden;letter-spacing:0.18px;">GBPCAD, Sell, on 2025.07.03 18:59:15 +2.0GMT  (Or</div><div class="t" style="left:455px;top:373px;width:300px;height:20px;background:#fbfdff;font-size:16px;color:#2e2e2e;line-height:20px;padding-left:4px;text-align:left;overflow:hidden;letter-spacing:0.5px;">- No. Positive Martingales: 1</div><div class="a" style="left:5px;top:392px;width:750px;height:2px;background:#b8c4d0;"></div><div class="a" style="left:54px;top:373px;width:2px;height:20px;background:#b8c4d0;"></div><div class="a" style="left:454px;top:373px;width:2px;height:20px;background:#b8c4d0;"></div><div class="a" style="left:5px;top:393px;width:750px;height:20px;background:#fbfdff;"></div><div class="t" style="left:5px;top:393px;width:50px;height:20px;background:#fbfdff;font-size:16px;color:#2e2e2e;line-height:20px;padding-left:4px;text-align:left;overflow:hidden;">#1159</div><div class="t" style="left:55px;top:393px;width:400px;height:20px;background:#fbfdff;font-size:16px;color:#2e2e2e;line-height:20px;padding-left:4px;text-align:left;overflow:hidden;letter-spacing:0.18px;">GBPCAD, Sell, on 2025.07.03 20:59:15 +2.0GMT  (Or</div><div class="t" style="left:455px;top:393px;width:300px;height:20px;background:#fbfdff;font-size:16px;color:#2e2e2e;line-height:20px;padding-left:4px;text-align:left;overflow:hidden;letter-spacing:0.5px;">- No. Positive Martingales: 0</div><div class="a" style="left:5px;top:412px;width:750px;height:2px;background:#b8c4d0;"></div><div class="a" style="left:54px;top:393px;width:2px;height:20px;background:#b8c4d0;"></div><div class="a" style="left:454px;top:393px;width:2px;height:20px;background:#b8c4d0;"></div><div class="a" style="left:5px;top:413px;width:750px;height:20px;background:#fbfdff;"></div><div class="t" style="left:5px;top:413px;width:50px;height:20px;background:#fbfdff;font-size:16px;color:#2e2e2e;line-height:20px;padding-left:4px;text-align:left;overflow:hidden;">#1538</div><div class="t" style="left:55px;top:413px;width:400px;height:20px;background:#fbfdff;font-size:16px;color:#2e2e2e;line-height:20px;padding-left:4px;text-align:left;overflow:hidden;letter-spacing:0.18px;">GBPCAD, Buy, on 2025.07.04 08:09:14 +2.0GMT  (Or</div><div class="t" style="left:455px;top:413px;width:300px;height:20px;background:#fbfdff;font-size:16px;color:#2e2e2e;line-height:20px;padding-left:4px;text-align:left;overflow:hidden;letter-spacing:0.5px;">- No. Positive Martingales: 5</div><div class="a" style="left:5px;top:432px;width:750px;height:2px;background:#b8c4d0;"></div><div class="a" style="left:54px;top:413px;width:2px;height:20px;background:#b8c4d0;"></div><div class="a" style="left:454px;top:413px;width:2px;height:20px;background:#b8c4d0;"></div><div class="a" style="left:5px;top:433px;width:750px;height:20px;background:#fbfdff;"></div><div class="t" style="left:5px;top:433px;width:50px;height:20px;background:#fbfdff;font-size:16px;color:#2e2e2e;line-height:20px;padding-left:4px;text-align:left;overflow:hidden;">#1630</div><div class="t" style="left:55px;top:433px;width:400px;height:20px;background:#fbfdff;font-size:16px;color:#2e2e2e;line-height:20px;padding-left:4px;text-align:left;overflow:hidden;letter-spacing:0.18px;">GBPCAD, Buy, on 2025.07.04 09:54:14 +2.0GMT  (Or</div><div class="t" style="left:455px;top:433px;width:300px;height:20px;background:#fbfdff;font-size:16px;color:#2e2e2e;line-height:20px;padding-left:4px;text-align:left;overflow:hidden;letter-spacing:0.5px;">- No. Positive Martingales: 1</div><div class="a" style="left:5px;top:452px;width:750px;height:2px;background:#b8c4d0;"></div><div class="a" style="left:54px;top:433px;width:2px;height:20px;background:#b8c4d0;"></div><div class="a" style="left:454px;top:433px;width:2px;height:20px;background:#b8c4d0;"></div><div class="t" style="left:1716px;top:113px;width:129px;height:50px;background:#ff0000;font-size:16px;color:#fff;line-height:50px;padding-left:0px;text-align:center;overflow:hidden;letter-spacing:0.4px;">Close All Orders</div><div class="a" style="left:1675px;top:163px;width:170px;height:91px;background:#d3d3d3;"></div><div class="t" style="left:1675px;top:163px;width:170px;height:30px;background:#d3d3d3;font-size:16px;color:#2e2e2e;line-height:30px;padding-left:0px;text-align:center;overflow:hidden;letter-spacing:0.7px;">Real-time profit</div><div class="t" style="left:1675px;top:193px;width:170px;height:30px;background:#d3d3d3;font-size:16px;color:#2e2e2e;line-height:30px;padding-left:0px;text-align:center;overflow:hidden;letter-spacing:0.7px;">since all trades</div><div class="t" style="left:1675px;top:223px;width:170px;height:30px;background:#d3d3d3;font-size:16px;color:#2e2e2e;line-height:30px;padding-left:0px;text-align:center;overflow:hidden;letter-spacing:0.7px;">closed last time</div><div class="t" style="left:1675px;top:254px;width:170px;height:27px;background:#dc143c;font-size:16px;color:#fff;line-height:27px;padding-left:0px;text-align:center;overflow:hidden;">-795.08 (-22%)</div><div class="a" style="left:1675px;top:281px;width:170px;height:3px;background:#dcc4d0;"></div><div class="t" style="left:1675px;top:284px;width:170px;height:28px;background:#dc143c;font-size:16px;color:#fff;line-height:28px;padding-left:0px;text-align:center;overflow:hidden;letter-spacing:0.4px;">Not Safe To Close All</div><svg class="a" style="left:5px;top:599px" width="11" height="11" viewBox="0 0 11 11"><path d="M1.5 1.5L9.5 9.5M9.5 1.5L1.5 9.5" stroke="#000" stroke-width="1.6"/></svg><div class="a" style="left:3px;top:616px;width:16px;height:392px;background:#000;"></div><div class="a" style="left:20px;top:616px;width:1px;height:392px;background:#a8a8a8;"></div><div class="t" style="left:4.5px;top:1006px;width:60px;height:16px;font-size:15px;color:#fff;line-height:16px;transform:rotate(-90deg);transform-origin:0 0;">Terminal</div><div class="a" style="left:21px;top:598px;width:1873px;height:27px;background:#000;"></div><div class="a" style="left:23px;top:600px;width:135px;height:23px;background:#fff;"></div><div class="a" style="left:160px;top:600px;width:233px;height:23px;background:#fff;"></div><div class="a" style="left:395px;top:600px;width:103px;height:23px;background:#fff;"></div><div class="a" style="left:500px;top:600px;width:83px;height:23px;background:#fff;"></div><div class="a" style="left:585px;top:600px;width:104px;height:23px;background:#fff;"></div><div class="a" style="left:691px;top:600px;width:104px;height:23px;background:#fff;"></div><div class="a" style="left:797px;top:600px;width:104px;height:23px;background:#fff;"></div><div class="a" style="left:903px;top:600px;width:104px;height:23px;background:#fff;"></div><div class="a" style="left:1009px;top:600px;width:232px;height:23px;background:#fff;"></div><div class="a" style="left:1243px;top:600px;width:104px;height:23px;background:#fff;"></div><div class="a" style="left:1349px;top:600px;width:104px;height:23px;background:#fff;"></div><div class="a" style="left:1455px;top:600px;width:115px;height:23px;background:#fff;"></div><div class="a" style="left:1572px;top:600px;width:320px;height:23px;background:#fff;"></div><div class="t" style="left:27px;top:605px;font-size:15px;color:#000;">Order</div><div class="t" style="left:158px;top:605px;font-size:15px;color:#000;width:231px;text-align:right;">Time</div><div class="t" style="left:393px;top:605px;font-size:15px;color:#000;width:101px;text-align:right;">Type</div><div class="t" style="left:498px;top:605px;font-size:15px;color:#000;width:81px;text-align:right;">Size</div><div class="t" style="left:583px;top:605px;font-size:15px;color:#000;width:102px;text-align:right;">Symbol</div><div class="t" style="left:689px;top:605px;font-size:15px;color:#000;width:102px;text-align:right;">Price</div><div class="t" style="left:795px;top:605px;font-size:15px;color:#000;width:102px;text-align:right;">S / L</div><div class="t" style="left:901px;top:605px;font-size:15px;color:#000;width:102px;text-align:right;">T / P</div><div class="t" style="left:1007px;top:605px;font-size:15px;color:#000;width:209px;text-align:right;">Time</div><svg class="a" style="left:1229px;top:607px" width="9" height="8" viewBox="0 0 9 8"><path d="M0.5 0.5h8L4.5 7.5z" fill="none" stroke="#555" stroke-width="1"/></svg><div class="t" style="left:1241px;top:605px;font-size:15px;color:#000;width:102px;text-align:right;">Price</div><div class="t" style="left:1347px;top:605px;font-size:15px;color:#000;width:102px;text-align:right;">Swap</div><div class="t" style="left:1453px;top:605px;font-size:15px;color:#000;width:113px;text-align:right;">Profit</div><div class="t" style="left:1570px;top:605px;font-size:15px;color:#000;width:318px;text-align:right;">Comment</div><div class="a" style="left:21px;top:625px;width:1872px;height:325px;background:#fff;"></div><div class="a" style="left:21px;top:625px;width:1872px;height:25px;background:#ebebeb;"></div><div class="a" style="left:21px;top:650px;width:1872px;height:1px;background:#cfcfcf;"></div><div class="a" style="left:157px;top:625px;width:1px;height:25px;background:#d4d4d4;"></div><div class="a" style="left:391px;top:625px;width:1px;height:25px;background:#d4d4d4;"></div><div class="a" style="left:497px;top:625px;width:1px;height:25px;background:#d4d4d4;"></div><div class="a" style="left:582px;top:625px;width:1px;height:25px;background:#d4d4d4;"></div><div class="a" style="left:688px;top:625px;width:1px;height:25px;background:#d4d4d4;"></div><div class="a" style="left:794px;top:625px;width:1px;height:25px;background:#d4d4d4;"></div><div class="a" style="left:900px;top:625px;width:1px;height:25px;background:#d4d4d4;"></div><div class="a" style="left:1006px;top:625px;width:1px;height:25px;background:#d4d4d4;"></div><div class="a" style="left:1240px;top:625px;width:1px;height:25px;background:#d4d4d4;"></div><div class="a" style="left:1346px;top:625px;width:1px;height:25px;background:#d4d4d4;"></div><div class="a" style="left:1452px;top:625px;width:1px;height:25px;background:#d4d4d4;"></div><div class="a" style="left:1569px;top:625px;width:1px;height:25px;background:#d4d4d4;"></div><svg class="a" style="left:24px;top:628px" width="20" height="20" viewBox="0 0 20 20"><path d="M3 1h9l4 4v13H3z" fill="#f8f8f8" stroke="#707070" stroke-width="1.3"/><path d="M12 1v4h4" fill="none" stroke="#707070" stroke-width="1"/><circle cx="15" cy="15" r="4.2" fill="#1a8ae0" stroke="#fff" stroke-width="0.8"/></svg><div class="t" style="left:48px;top:630px;font-size:15px;color:#000;letter-spacing:-0.3px;">313825364</div><div class="t" style="left:187px;top:630px;font-size:15px;color:#000;width:200.5px;text-align:right;letter-spacing:-0.5px;">2025.07.03 10:11:24</div><div class="t" style="left:293px;top:630px;font-size:15px;color:#000;width:200.5px;text-align:right;letter-spacing:-0.3px;">buy</div><div class="t" style="left:378px;top:630px;font-size:15px;color:#000;width:200.5px;text-align:right;letter-spacing:-0.3px;">0.10</div><div class="t" style="left:484px;top:630px;font-size:15px;color:#000;width:200.5px;text-align:right;letter-spacing:-0.3px;">gbpcad</div><div class="t" style="left:591px;top:630px;font-size:15px;color:#000;width:200.5px;text-align:right;letter-spacing:-0.3px;">1.85710</div><div class="t" style="left:697px;top:630px;font-size:15px;color:#000;width:200.5px;text-align:right;letter-spacing:-0.3px;">0.00000</div><div class="t" style="left:803px;top:630px;font-size:15px;color:#000;width:200.5px;text-align:right;letter-spacing:-0.3px;">0.00000</div><div class="t" style="left:1037px;top:630px;font-size:15px;color:#000;width:200.5px;text-align:right;letter-spacing:-0.5px;">2025.07.03 16:11:22</div><div class="t" style="left:1143px;top:630px;font-size:15px;color:#000;width:200.5px;text-align:right;letter-spacing:-0.3px;">1.85303</div><div class="t" style="left:1248px;top:630px;font-size:15px;color:#000;width:200.5px;text-align:right;letter-spacing:-0.3px;">0.00</div><div class="t" style="left:1366px;top:630px;font-size:15px;color:#000;width:200.5px;text-align:right;letter-spacing:-0.3px;">-29.93</div><div class="t" style="left:1687px;top:630px;font-size:15px;color:#000;width:200.9px;text-align:right;letter-spacing:-0.9px;">5219_10_0_2_0_0_1</div><div class="a" style="left:21px;top:650px;width:1872px;height:25px;background:#fff;"></div><div class="a" style="left:21px;top:675px;width:1872px;height:1px;background:#cfcfcf;"></div><div class="a" style="left:157px;top:650px;width:1px;height:25px;background:#d4d4d4;"></div><div class="a" style="left:391px;top:650px;width:1px;height:25px;background:#d4d4d4;"></div><div class="a" style="left:497px;top:650px;width:1px;height:25px;background:#d4d4d4;"></div><div class="a" style="left:582px;top:650px;width:1px;height:25px;background:#d4d4d4;"></div><div class="a" style="left:688px;top:650px;width:1px;height:25px;background:#d4d4d4;"></div><div class="a" style="left:794px;top:650px;width:1px;height:25px;background:#d4d4d4;"></div><div class="a" style="left:900px;top:650px;width:1px;height:25px;background:#d4d4d4;"></div><div class="a" style="left:1006px;top:650px;width:1px;height:25px;background:#d4d4d4;"></div><div class="a" style="left:1240px;top:650px;width:1px;height:25px;background:#d4d4d4;"></div><div class="a" style="left:1346px;top:650px;width:1px;height:25px;background:#d4d4d4;"></div><div class="a" style="left:1452px;top:650px;width:1px;height:25px;background:#d4d4d4;"></div><div class="a" style="left:1569px;top:650px;width:1px;height:25px;background:#d4d4d4;"></div><div class="a" style="left:902px;top:651px;width:104px;height:24px;background:#5ded5d;"></div><svg class="a" style="left:24px;top:653px" width="20" height="20" viewBox="0 0 20 20"><path d="M3 1h9l4 4v13H3z" fill="#f8f8f8" stroke="#707070" stroke-width="1.3"/><path d="M12 1v4h4" fill="none" stroke="#707070" stroke-width="1"/><circle cx="15" cy="15" r="4.2" fill="#e04a10" stroke="#fff" stroke-width="0.8"/></svg><div class="t" style="left:48px;top:655px;font-size:15px;color:#000;letter-spacing:-0.3px;">313828269</div><div class="t" style="left:187px;top:655px;font-size:15px;color:#000;width:200.5px;text-align:right;letter-spacing:-0.5px;">2025.07.03 12:08:11</div><div class="t" style="left:293px;top:655px;font-size:15px;color:#000;width:200.5px;text-align:right;letter-spacing:-0.3px;">sell</div><div class="t" style="left:378px;top:655px;font-size:15px;color:#000;width:200.5px;text-align:right;letter-spacing:-0.3px;">0.10</div><div class="t" style="left:484px;top:655px;font-size:15px;color:#000;width:200.5px;text-align:right;letter-spacing:-0.3px;">gbpcad</div><div class="t" style="left:591px;top:655px;font-size:15px;color:#000;width:200.5px;text-align:right;letter-spacing:-0.3px;">1.85670</div><div class="t" style="left:697px;top:655px;font-size:15px;color:#000;width:200.5px;text-align:right;letter-spacing:-0.3px;">0.00000</div><div class="t" style="left:803px;top:655px;font-size:15px;color:#000;width:200.5px;text-align:right;letter-spacing:-0.3px;">1.85630</div><div class="t" style="left:1037px;top:655px;font-size:15px;color:#000;width:200.5px;text-align:right;letter-spacing:-0.5px;">2025.07.03 12:39:19</div><div class="t" style="left:1143px;top:655px;font-size:15px;color:#000;width:200.5px;text-align:right;letter-spacing:-0.3px;">1.85621</div><div class="t" style="left:1248px;top:655px;font-size:15px;color:#000;width:200.5px;text-align:right;letter-spacing:-0.3px;">0.00</div><div class="t" style="left:1366px;top:655px;font-size:15px;color:#000;width:200.5px;text-align:right;letter-spacing:-0.3px;">3.61</div><div class="t" style="left:1687px;top:655px;font-size:15px;color:#000;width:200.9px;text-align:right;letter-spacing:0.2px;">[tp]</div><div class="a" style="left:21px;top:675px;width:1872px;height:25px;background:#ebebeb;"></div><div class="a" style="left:21px;top:700px;width:1872px;height:1px;background:#cfcfcf;"></div><div class="a" style="left:157px;top:675px;width:1px;height:25px;background:#d4d4d4;"></div><div class="a" style="left:391px;top:675px;width:1px;height:25px;background:#d4d4d4;"></div><div class="a" style="left:497px;top:675px;width:1px;height:25px;background:#d4d4d4;"></div><div class="a" style="left:582px;top:675px;width:1px;height:25px;background:#d4d4d4;"></div><div class="a" style="left:688px;top:675px;width:1px;height:25px;background:#d4d4d4;"></div><div class="a" style="left:794px;top:675px;width:1px;height:25px;background:#d4d4d4;"></div><div class="a" style="left:900px;top:675px;width:1px;height:25px;background:#d4d4d4;"></div><div class="a" style="left:1006px;top:675px;width:1px;height:25px;background:#d4d4d4;"></div><div class="a" style="left:1240px;top:675px;width:1px;height:25px;background:#d4d4d4;"></div><div class="a" style="left:1346px;top:675px;width:1px;height:25px;background:#d4d4d4;"></div><div class="a" style="left:1452px;top:675px;width:1px;height:25px;background:#d4d4d4;"></div><div class="a" style="left:1569px;top:675px;width:1px;height:25px;background:#d4d4d4;"></div><svg class="a" style="left:24px;top:678px" width="20" height="20" viewBox="0 0 20 20"><path d="M3 1h9l4 4v13H3z" fill="#f8f8f8" stroke="#707070" stroke-width="1.3"/><path d="M12 1v4h4" fill="none" stroke="#707070" stroke-width="1"/><circle cx="15" cy="15" r="4.2" fill="#1a8ae0" stroke="#fff" stroke-width="0.8"/></svg><div class="t" style="left:48px;top:680px;font-size:15px;color:#000;letter-spacing:-0.3px;">313802508</div><div class="t" style="left:187px;top:680px;font-size:15px;color:#000;width:200.5px;text-align:right;letter-spacing:-0.5px;">2025.07.03 00:41:06</div><div class="t" style="left:293px;top:680px;font-size:15px;color:#000;width:200.5px;text-align:right;letter-spacing:-0.3px;">buy</div><div class="t" style="left:378px;top:680px;font-size:15px;color:#000;width:200.5px;text-align:right;letter-spacing:-0.3px;">0.10</div><div class="t" style="left:484px;top:680px;font-size:15px;color:#000;width:200.5px;text-align:right;letter-spacing:-0.3px;">gbpcad</div><div class="t" style="left:591px;top:680px;font-size:15px;color:#000;width:200.5px;text-align:right;letter-spacing:-0.3px;">1.85673</div><div class="t" style="left:697px;top:680px;font-size:15px;color:#000;width:200.5px;text-align:right;letter-spacing:-0.3px;">0.00000</div><div class="t" style="left:803px;top:680px;font-size:15px;color:#000;width:200.5px;text-align:right;letter-spacing:-0.3px;">0.00000</div><div class="t" style="left:1037px;top:680px;font-size:15px;color:#000;width:200.5px;text-align:right;letter-spacing:-0.5px;">2025.07.03 12:07:12</div><div class="t" style="left:1143px;top:680px;font-size:15px;color:#000;width:200.5px;text-align:right;letter-spacing:-0.3px;">1.85689</div><div class="t" style="left:1248px;top:680px;font-size:15px;color:#000;width:200.5px;text-align:right;letter-spacing:-0.3px;">0.00</div><div class="t" style="left:1366px;top:680px;font-size:15px;color:#000;width:200.5px;text-align:right;letter-spacing:-0.3px;">1.18</div><div class="t" style="left:1687px;top:680px;font-size:15px;color:#000;width:200.9px;text-align:right;letter-spacing:-0.9px;">1046_6_0_2_0_0_1</div><div class="a" style="left:21px;top:700px;width:1872px;height:25px;background:#fff;"></div><div class="a" style="left:21px;top:725px;width:1872px;height:1px;background:#cfcfcf;"></div><div class="a" style="left:157px;top:700px;width:1px;height:25px;background:#d4d4d4;"></div><div class="a" style="left:391px;top:700px;width:1px;height:25px;background:#d4d4d4;"></div><div class="a" style="left:497px;top:700px;width:1px;height:25px;background:#d4d4d4;"></div><div class="a" style="left:582px;top:700px;width:1px;height:25px;background:#d4d4d4;"></div><div class="a" style="left:688px;top:700px;width:1px;height:25px;background:#d4d4d4;"></div><div class="a" style="left:794px;top:700px;width:1px;height:25px;background:#d4d4d4;"></div><div class="a" style="left:900px;top:700px;width:1px;height:25px;background:#d4d4d4;"></div><div class="a" style="left:1006px;top:700px;width:1px;height:25px;background:#d4d4d4;"></div><div class="a" style="left:1240px;top:700px;width:1px;height:25px;background:#d4d4d4;"></div><div class="a" style="left:1346px;top:700px;width:1px;height:25px;background:#d4d4d4;"></div><div class="a" style="left:1452px;top:700px;width:1px;height:25px;background:#d4d4d4;"></div><div class="a" style="left:1569px;top:700px;width:1px;height:25px;background:#d4d4d4;"></div><svg class="a" style="left:24px;top:703px" width="20" height="20" viewBox="0 0 20 20"><path d="M3 1h9l4 4v13H3z" fill="#f8f8f8" stroke="#707070" stroke-width="1.3"/><path d="M12 1v4h4" fill="none" stroke="#707070" stroke-width="1"/><circle cx="15" cy="15" r="4.2" fill="#1a8ae0" stroke="#fff" stroke-width="0.8"/></svg><div class="t" style="left:48px;top:705px;font-size:15px;color:#000;letter-spacing:-0.3px;">313825127</div><div class="t" style="left:187px;top:705px;font-size:15px;color:#000;width:200.5px;text-align:right;letter-spacing:-0.5px;">2025.07.03 10:01:42</div><div class="t" style="left:293px;top:705px;font-size:15px;color:#000;width:200.5px;text-align:right;letter-spacing:-0.3px;">buy</div><div class="t" style="left:378px;top:705px;font-size:15px;color:#000;width:200.5px;text-align:right;letter-spacing:-0.3px;">0.10</div><div class="t" style="left:484px;top:705px;font-size:15px;color:#000;width:200.5px;text-align:right;letter-spacing:-0.3px;">gbpcad</div><div class="t" style="left:591px;top:705px;font-size:15px;color:#000;width:200.5px;text-align:right;letter-spacing:-0.3px;">1.85651</div><div class="t" style="left:697px;top:705px;font-size:15px;color:#000;width:200.5px;text-align:right;letter-spacing:-0.3px;">0.00000</div><div class="t" style="left:803px;top:705px;font-size:15px;color:#000;width:200.5px;text-align:right;letter-spacing:-0.3px;">0.00000</div><div class="t" style="left:1037px;top:705px;font-size:15px;color:#000;width:200.5px;text-align:right;letter-spacing:-0.5px;">2025.07.03 12:07:10</div><div class="t" style="left:1143px;top:705px;font-size:15px;color:#000;width:200.5px;text-align:right;letter-spacing:-0.3px;">1.85689</div><div class="t" style="left:1248px;top:705px;font-size:15px;color:#000;width:200.5px;text-align:right;letter-spacing:-0.3px;">0.00</div><div class="t" style="left:1366px;top:705px;font-size:15px;color:#000;width:200.5px;text-align:right;letter-spacing:-0.3px;">2.80</div><div class="t" style="left:1687px;top:705px;font-size:15px;color:#000;width:200.9px;text-align:right;letter-spacing:-0.9px;">5219_8_0_2_0_0_1</div><div class="a" style="left:21px;top:725px;width:1872px;height:25px;background:#ebebeb;"></div><div class="a" style="left:21px;top:750px;width:1872px;height:1px;background:#cfcfcf;"></div><div class="a" style="left:157px;top:725px;width:1px;height:25px;background:#d4d4d4;"></div><div class="a" style="left:391px;top:725px;width:1px;height:25px;background:#d4d4d4;"></div><div class="a" style="left:497px;top:725px;width:1px;height:25px;background:#d4d4d4;"></div><div class="a" style="left:582px;top:725px;width:1px;height:25px;background:#d4d4d4;"></div><div class="a" style="left:688px;top:725px;width:1px;height:25px;background:#d4d4d4;"></div><div class="a" style="left:794px;top:725px;width:1px;height:25px;background:#d4d4d4;"></div><div class="a" style="left:900px;top:725px;width:1px;height:25px;background:#d4d4d4;"></div><div class="a" style="left:1006px;top:725px;width:1px;height:25px;background:#d4d4d4;"></div><div class="a" style="left:1240px;top:725px;width:1px;height:25px;background:#d4d4d4;"></div><div class="a" style="left:1346px;top:725px;width:1px;height:25px;background:#d4d4d4;"></div><div class="a" style="left:1452px;top:725px;width:1px;height:25px;background:#d4d4d4;"></div><div class="a" style="left:1569px;top:725px;width:1px;height:25px;background:#d4d4d4;"></div><svg class="a" style="left:24px;top:728px" width="20" height="20" viewBox="0 0 20 20"><path d="M3 1h9l4 4v13H3z" fill="#f8f8f8" stroke="#707070" stroke-width="1.3"/><path d="M12 1v4h4" fill="none" stroke="#707070" stroke-width="1"/><circle cx="15" cy="15" r="4.2" fill="#1a8ae0" stroke="#fff" stroke-width="0.8"/></svg><div class="t" style="left:48px;top:730px;font-size:15px;color:#000;letter-spacing:-0.3px;">313802462</div><div class="t" style="left:187px;top:730px;font-size:15px;color:#000;width:200.5px;text-align:right;letter-spacing:-0.5px;">2025.07.03 00:40:21</div><div class="t" style="left:293px;top:730px;font-size:15px;color:#000;width:200.5px;text-align:right;letter-spacing:-0.3px;">buy</div><div class="t" style="left:378px;top:730px;font-size:15px;color:#000;width:200.5px;text-align:right;letter-spacing:-0.3px;">0.10</div><div class="t" style="left:484px;top:730px;font-size:15px;color:#000;width:200.5px;text-align:right;letter-spacing:-0.3px;">gbpcad</div><div class="t" style="left:591px;top:730px;font-size:15px;color:#000;width:200.5px;text-align:right;letter-spacing:-0.3px;">1.85633</div><div class="t" style="left:697px;top:730px;font-size:15px;color:#000;width:200.5px;text-align:right;letter-spacing:-0.3px;">0.00000</div><div class="t" style="left:803px;top:730px;font-size:15px;color:#000;width:200.5px;text-align:right;letter-spacing:-0.3px;">0.00000</div><div class="t" style="left:1037px;top:730px;font-size:15px;color:#000;width:200.5px;text-align:right;letter-spacing:-0.5px;">2025.07.03 12:07:08</div><div class="t" style="left:1143px;top:730px;font-size:15px;color:#000;width:200.5px;text-align:right;letter-spacing:-0.3px;">1.85688</div><div class="t" style="left:1248px;top:730px;font-size:15px;color:#000;width:200.5px;text-align:right;letter-spacing:-0.3px;">0.00</div><div class="t" style="left:1366px;top:730px;font-size:15px;color:#000;width:200.5px;text-align:right;letter-spacing:-0.3px;">4.04</div><div class="t" style="left:1687px;top:730px;font-size:15px;color:#000;width:200.9px;text-align:right;letter-spacing:-0.9px;">1046_4_0_2_0_0_1</div><div class="a" style="left:21px;top:750px;width:1872px;height:25px;background:#3a0070;"></div><div class="a" style="left:21px;top:749px;width:1872px;height:1px;background:#f4f0f8;"></div><div class="a" style="left:157px;top:750px;width:1px;height:25px;background:#6a4a90;"></div><div class="a" style="left:391px;top:750px;width:1px;height:25px;background:#6a4a90;"></div><div class="a" style="left:497px;top:750px;width:1px;height:25px;background:#6a4a90;"></div><div class="a" style="left:582px;top:750px;width:1px;height:25px;background:#6a4a90;"></div><div class="a" style="left:688px;top:750px;width:1px;height:25px;background:#6a4a90;"></div><div class="a" style="left:794px;top:750px;width:1px;height:25px;background:#6a4a90;"></div><div class="a" style="left:900px;top:750px;width:1px;height:25px;background:#6a4a90;"></div><div class="a" style="left:1006px;top:750px;width:1px;height:25px;background:#6a4a90;"></div><div class="a" style="left:1240px;top:750px;width:1px;height:25px;background:#6a4a90;"></div><div class="a" style="left:1346px;top:750px;width:1px;height:25px;background:#6a4a90;"></div><div class="a" style="left:1452px;top:750px;width:1px;height:25px;background:#6a4a90;"></div><div class="a" style="left:1569px;top:750px;width:1px;height:25px;background:#6a4a90;"></div><svg class="a" style="left:24px;top:753px" width="20" height="20" viewBox="0 0 20 20"><path d="M3 1h9l4 4v13H3z" fill="#f8f8f8" stroke="#707070" stroke-width="1.3"/><path d="M12 1v4h4" fill="none" stroke="#707070" stroke-width="1"/><circle cx="15" cy="15" r="4.2" fill="#e04a10" stroke="#fff" stroke-width="0.8"/></svg><div class="t" style="left:48px;top:755px;font-size:15px;color:#fff;letter-spacing:-0.3px;">313798685</div><div class="t" style="left:187px;top:755px;font-size:15px;color:#fff;width:200.5px;text-align:right;letter-spacing:-0.5px;">2025.07.02 19:41:56</div><div class="t" style="left:293px;top:755px;font-size:15px;color:#fff;width:200.5px;text-align:right;letter-spacing:-0.3px;">sell</div><div class="t" style="left:378px;top:755px;font-size:15px;color:#fff;width:200.5px;text-align:right;letter-spacing:-0.3px;">0.10</div><div class="t" style="left:484px;top:755px;font-size:15px;color:#fff;width:200.5px;text-align:right;letter-spacing:-0.3px;">gbpcad</div><div class="t" style="left:591px;top:755px;font-size:15px;color:#fff;width:200.5px;text-align:right;letter-spacing:-0.3px;">1.85382</div><div class="t" style="left:697px;top:755px;font-size:15px;color:#fff;width:200.5px;text-align:right;letter-spacing:-0.3px;">0.00000</div><div class="t" style="left:803px;top:755px;font-size:15px;color:#fff;width:200.5px;text-align:right;letter-spacing:-0.3px;">0.00000</div><div class="t" style="left:1037px;top:755px;font-size:15px;color:#fff;width:200.5px;text-align:right;letter-spacing:-0.5px;">2025.07.03 10:04:05</div><div class="t" style="left:1143px;top:755px;font-size:15px;color:#fff;width:200.5px;text-align:right;letter-spacing:-0.3px;">1.85637</div><div class="t" style="left:1248px;top:755px;font-size:15px;color:#fff;width:200.5px;text-align:right;letter-spacing:-0.3px;">-2.56</div><div class="t" style="left:1366px;top:755px;font-size:15px;color:#fff;width:200.5px;text-align:right;letter-spacing:-0.3px;">-18.75</div><div class="t" style="left:1687px;top:755px;font-size:15px;color:#fff;width:200.9px;text-align:right;letter-spacing:-0.9px;">123_8_0_2_0_0_1</div><div class="a" style="left:21px;top:775px;width:1872px;height:25px;background:#ebebeb;"></div><div class="a" style="left:21px;top:800px;width:1872px;height:1px;background:#cfcfcf;"></div><div class="a" style="left:157px;top:775px;width:1px;height:25px;background:#d4d4d4;"></div><div class="a" style="left:391px;top:775px;width:1px;height:25px;background:#d4d4d4;"></div><div class="a" style="left:497px;top:775px;width:1px;height:25px;background:#d4d4d4;"></div><div class="a" style="left:582px;top:775px;width:1px;height:25px;background:#d4d4d4;"></div><div class="a" style="left:688px;top:775px;width:1px;height:25px;background:#d4d4d4;"></div><div class="a" style="left:794px;top:775px;width:1px;height:25px;background:#d4d4d4;"></div><div class="a" style="left:900px;top:775px;width:1px;height:25px;background:#d4d4d4;"></div><div class="a" style="left:1006px;top:775px;width:1px;height:25px;background:#d4d4d4;"></div><div class="a" style="left:1240px;top:775px;width:1px;height:25px;background:#d4d4d4;"></div><div class="a" style="left:1346px;top:775px;width:1px;height:25px;background:#d4d4d4;"></div><div class="a" style="left:1452px;top:775px;width:1px;height:25px;background:#d4d4d4;"></div><div class="a" style="left:1569px;top:775px;width:1px;height:25px;background:#d4d4d4;"></div><svg class="a" style="left:24px;top:778px" width="20" height="20" viewBox="0 0 20 20"><path d="M3 1h9l4 4v13H3z" fill="#f8f8f8" stroke="#707070" stroke-width="1.3"/><path d="M12 1v4h4" fill="none" stroke="#707070" stroke-width="1"/><circle cx="15" cy="15" r="4.2" fill="#1a8ae0" stroke="#fff" stroke-width="0.8"/></svg><div class="t" style="left:48px;top:780px;font-size:15px;color:#000;letter-spacing:-0.3px;">313825033</div><div class="t" style="left:187px;top:780px;font-size:15px;color:#000;width:200.5px;text-align:right;letter-spacing:-0.5px;">2025.07.03 10:00:17</div><div class="t" style="left:293px;top:780px;font-size:15px;color:#000;width:200.5px;text-align:right;letter-spacing:-0.3px;">buy</div><div class="t" style="left:378px;top:780px;font-size:15px;color:#000;width:200.5px;text-align:right;letter-spacing:-0.3px;">0.10</div><div class="t" style="left:484px;top:780px;font-size:15px;color:#000;width:200.5px;text-align:right;letter-spacing:-0.3px;">gbpcad</div><div class="t" style="left:591px;top:780px;font-size:15px;color:#000;width:200.5px;text-align:right;letter-spacing:-0.3px;">1.85594</div><div class="t" style="left:697px;top:780px;font-size:15px;color:#000;width:200.5px;text-align:right;letter-spacing:-0.3px;">0.00000</div><div class="t" style="left:803px;top:780px;font-size:15px;color:#000;width:200.5px;text-align:right;letter-spacing:-0.3px;">0.00000</div><div class="t" style="left:1037px;top:780px;font-size:15px;color:#000;width:200.5px;text-align:right;letter-spacing:-0.5px;">2025.07.03 10:03:30</div><div class="t" style="left:1143px;top:780px;font-size:15px;color:#000;width:200.5px;text-align:right;letter-spacing:-0.3px;">1.85589</div><div class="t" style="left:1248px;top:780px;font-size:15px;color:#000;width:200.5px;text-align:right;letter-spacing:-0.3px;">0.00</div><div class="t" style="left:1366px;top:780px;font-size:15px;color:#000;width:200.5px;text-align:right;letter-spacing:-0.3px;">-0.37</div><div class="t" style="left:1687px;top:780px;font-size:15px;color:#000;width:200.9px;text-align:right;letter-spacing:-0.9px;">5219_6_0_2_0_0_1</div><div class="a" style="left:21px;top:800px;width:1872px;height:25px;background:#fff;"></div><div class="a" style="left:21px;top:825px;width:1872px;height:1px;background:#cfcfcf;"></div><div class="a" style="left:157px;top:800px;width:1px;height:25px;background:#d4d4d4;"></div><div class="a" style="left:391px;top:800px;width:1px;height:25px;background:#d4d4d4;"></div><div class="a" style="left:497px;top:800px;width:1px;height:25px;background:#d4d4d4;"></div><div class="a" style="left:582px;top:800px;width:1px;height:25px;background:#d4d4d4;"></div><div class="a" style="left:688px;top:800px;width:1px;height:25px;background:#d4d4d4;"></div><div class="a" style="left:794px;top:800px;width:1px;height:25px;background:#d4d4d4;"></div><div class="a" style="left:900px;top:800px;width:1px;height:25px;background:#d4d4d4;"></div><div class="a" style="left:1006px;top:800px;width:1px;height:25px;background:#d4d4d4;"></div><div class="a" style="left:1240px;top:800px;width:1px;height:25px;background:#d4d4d4;"></div><div class="a" style="left:1346px;top:800px;width:1px;height:25px;background:#d4d4d4;"></div><div class="a" style="left:1452px;top:800px;width:1px;height:25px;background:#d4d4d4;"></div><div class="a" style="left:1569px;top:800px;width:1px;height:25px;background:#d4d4d4;"></div><svg class="a" style="left:24px;top:803px" width="20" height="20" viewBox="0 0 20 20"><path d="M3 1h9l4 4v13H3z" fill="#f8f8f8" stroke="#707070" stroke-width="1.3"/><path d="M12 1v4h4" fill="none" stroke="#707070" stroke-width="1"/><circle cx="15" cy="15" r="4.2" fill="#1a8ae0" stroke="#fff" stroke-width="0.8"/></svg><div class="t" style="left:48px;top:805px;font-size:15px;color:#000;letter-spacing:-0.3px;">313824930</div><div class="t" style="left:187px;top:805px;font-size:15px;color:#000;width:200.5px;text-align:right;letter-spacing:-0.5px;">2025.07.03 09:57:26</div><div class="t" style="left:293px;top:805px;font-size:15px;color:#000;width:200.5px;text-align:right;letter-spacing:-0.3px;">buy</div><div class="t" style="left:378px;top:805px;font-size:15px;color:#000;width:200.5px;text-align:right;letter-spacing:-0.3px;">0.10</div><div class="t" style="left:484px;top:805px;font-size:15px;color:#000;width:200.5px;text-align:right;letter-spacing:-0.3px;">gbpcad</div><div class="t" style="left:591px;top:805px;font-size:15px;color:#000;width:200.5px;text-align:right;letter-spacing:-0.3px;">1.85570</div><div class="t" style="left:697px;top:805px;font-size:15px;color:#000;width:200.5px;text-align:right;letter-spacing:-0.3px;">0.00000</div><div class="t" style="left:803px;top:805px;font-size:15px;color:#000;width:200.5px;text-align:right;letter-spacing:-0.3px;">0.00000</div><div class="t" style="left:1037px;top:805px;font-size:15px;color:#000;width:200.5px;text-align:right;letter-spacing:-0.5px;">2025.07.03 10:03:28</div><div class="t" style="left:1143px;top:805px;font-size:15px;color:#000;width:200.5px;text-align:right;letter-spacing:-0.3px;">1.85594</div><div class="t" style="left:1248px;top:805px;font-size:15px;color:#000;width:200.5px;text-align:right;letter-spacing:-0.3px;">0.00</div><div class="t" style="left:1366px;top:805px;font-size:15px;color:#000;width:200.5px;text-align:right;letter-spacing:-0.3px;">1.77</div><div class="t" style="left:1687px;top:805px;font-size:15px;color:#000;width:200.9px;text-align:right;letter-spacing:-0.9px;">5219_4_0_2_0_0_1</div><div class="a" style="left:21px;top:825px;width:1872px;height:25px;background:#ebebeb;"></div><div class="a" style="left:21px;top:850px;width:1872px;height:1px;background:#cfcfcf;"></div><div class="a" style="left:157px;top:825px;width:1px;height:25px;background:#d4d4d4;"></div><div class="a" style="left:391px;top:825px;width:1px;height:25px;background:#d4d4d4;"></div><div class="a" style="left:497px;top:825px;width:1px;height:25px;background:#d4d4d4;"></div><div class="a" style="left:582px;top:825px;width:1px;height:25px;background:#d4d4d4;"></div><div class="a" style="left:688px;top:825px;width:1px;height:25px;background:#d4d4d4;"></div><div class="a" style="left:794px;top:825px;width:1px;height:25px;background:#d4d4d4;"></div><div class="a" style="left:900px;top:825px;width:1px;height:25px;background:#d4d4d4;"></div><div class="a" style="left:1006px;top:825px;width:1px;height:25px;background:#d4d4d4;"></div><div class="a" style="left:1240px;top:825px;width:1px;height:25px;background:#d4d4d4;"></div><div class="a" style="left:1346px;top:825px;width:1px;height:25px;background:#d4d4d4;"></div><div class="a" style="left:1452px;top:825px;width:1px;height:25px;background:#d4d4d4;"></div><div class="a" style="left:1569px;top:825px;width:1px;height:25px;background:#d4d4d4;"></div><svg class="a" style="left:24px;top:828px" width="20" height="20" viewBox="0 0 20 20"><path d="M3 1h9l4 4v13H3z" fill="#f8f8f8" stroke="#707070" stroke-width="1.3"/><path d="M12 1v4h4" fill="none" stroke="#707070" stroke-width="1"/><circle cx="15" cy="15" r="4.2" fill="#1a8ae0" stroke="#fff" stroke-width="0.8"/></svg><div class="t" style="left:48px;top:830px;font-size:15px;color:#000;letter-spacing:-0.3px;">313824867</div><div class="t" style="left:187px;top:830px;font-size:15px;color:#000;width:200.5px;text-align:right;letter-spacing:-0.5px;">2025.07.03 09:55:48</div><div class="t" style="left:293px;top:830px;font-size:15px;color:#000;width:200.5px;text-align:right;letter-spacing:-0.3px;">buy</div><div class="t" style="left:378px;top:830px;font-size:15px;color:#000;width:200.5px;text-align:right;letter-spacing:-0.3px;">0.10</div><div class="t" style="left:484px;top:830px;font-size:15px;color:#000;width:200.5px;text-align:right;letter-spacing:-0.3px;">gbpcad</div><div class="t" style="left:591px;top:830px;font-size:15px;color:#000;width:200.5px;text-align:right;letter-spacing:-0.3px;">1.85539</div><div class="t" style="left:697px;top:830px;font-size:15px;color:#000;width:200.5px;text-align:right;letter-spacing:-0.3px;">0.00000</div><div class="t" style="left:803px;top:830px;font-size:15px;color:#000;width:200.5px;text-align:right;letter-spacing:-0.3px;">0.00000</div><div class="t" style="left:1037px;top:830px;font-size:15px;color:#000;width:200.5px;text-align:right;letter-spacing:-0.5px;">2025.07.03 10:03:27</div><div class="t" style="left:1143px;top:830px;font-size:15px;color:#000;width:200.5px;text-align:right;letter-spacing:-0.3px;">1.85598</div><div class="t" style="left:1248px;top:830px;font-size:15px;color:#000;width:200.5px;text-align:right;letter-spacing:-0.3px;">0.00</div><div class="t" style="left:1366px;top:830px;font-size:15px;color:#000;width:200.5px;text-align:right;letter-spacing:-0.3px;">4.34</div><div class="t" style="left:1687px;top:830px;font-size:15px;color:#000;width:200.9px;text-align:right;letter-spacing:-0.9px;">5219_2_0_2_0_0_1</div><div class="a" style="left:21px;top:850px;width:1872px;height:25px;background:#fff;"></div><div class="a" style="left:21px;top:875px;width:1872px;height:1px;background:#cfcfcf;"></div><div class="a" style="left:157px;top:850px;width:1px;height:25px;background:#d4d4d4;"></div><div class="a" style="left:391px;top:850px;width:1px;height:25px;background:#d4d4d4;"></div><div class="a" style="left:497px;top:850px;width:1px;height:25px;background:#d4d4d4;"></div><div class="a" style="left:582px;top:850px;width:1px;height:25px;background:#d4d4d4;"></div><div class="a" style="left:688px;top:850px;width:1px;height:25px;background:#d4d4d4;"></div><div class="a" style="left:794px;top:850px;width:1px;height:25px;background:#d4d4d4;"></div><div class="a" style="left:900px;top:850px;width:1px;height:25px;background:#d4d4d4;"></div><div class="a" style="left:1006px;top:850px;width:1px;height:25px;background:#d4d4d4;"></div><div class="a" style="left:1240px;top:850px;width:1px;height:25px;background:#d4d4d4;"></div><div class="a" style="left:1346px;top:850px;width:1px;height:25px;background:#d4d4d4;"></div><div class="a" style="left:1452px;top:850px;width:1px;height:25px;background:#d4d4d4;"></div><div class="a" style="left:1569px;top:850px;width:1px;height:25px;background:#d4d4d4;"></div><svg class="a" style="left:24px;top:853px" width="20" height="20" viewBox="0 0 20 20"><path d="M3 1h9l4 4v13H3z" fill="#f8f8f8" stroke="#707070" stroke-width="1.3"/><path d="M12 1v4h4" fill="none" stroke="#707070" stroke-width="1"/><circle cx="15" cy="15" r="4.2" fill="#1a8ae0" stroke="#fff" stroke-width="0.8"/></svg><div class="t" style="left:48px;top:855px;font-size:15px;color:#000;letter-spacing:-0.3px;">313824828</div><div class="t" style="left:187px;top:855px;font-size:15px;color:#000;width:200.5px;text-align:right;letter-spacing:-0.5px;">2025.07.03 09:54:16</div><div class="t" style="left:293px;top:855px;font-size:15px;color:#000;width:200.5px;text-align:right;letter-spacing:-0.3px;">buy</div><div class="t" style="left:378px;top:855px;font-size:15px;color:#000;width:200.5px;text-align:right;letter-spacing:-0.3px;">0.10</div><div class="t" style="left:484px;top:855px;font-size:15px;color:#000;width:200.5px;text-align:right;letter-spacing:-0.3px;">gbpcad</div><div class="t" style="left:591px;top:855px;font-size:15px;color:#000;width:200.5px;text-align:right;letter-spacing:-0.3px;">1.85486</div><div class="t" style="left:697px;top:855px;font-size:15px;color:#000;width:200.5px;text-align:right;letter-spacing:-0.3px;">0.00000</div><div class="t" style="left:803px;top:855px;font-size:15px;color:#000;width:200.5px;text-align:right;letter-spacing:-0.3px;">0.00000</div><div class="t" style="left:1037px;top:855px;font-size:15px;color:#000;width:200.5px;text-align:right;letter-spacing:-0.5px;">2025.07.03 10:03:25</div><div class="t" style="left:1143px;top:855px;font-size:15px;color:#000;width:200.5px;text-align:right;letter-spacing:-0.3px;">1.85603</div><div class="t" style="left:1248px;top:855px;font-size:15px;color:#000;width:200.5px;text-align:right;letter-spacing:-0.3px;">0.00</div><div class="t" style="left:1366px;top:855px;font-size:15px;color:#000;width:200.5px;text-align:right;letter-spacing:-0.3px;">8.61</div><div class="t" style="left:1687px;top:855px;font-size:15px;color:#000;width:200.9px;text-align:right;letter-spacing:-0.9px;">5219_0_0_2_0_0_1</div><div class="a" style="left:21px;top:875px;width:1872px;height:25px;background:#ebebeb;"></div><div class="a" style="left:21px;top:900px;width:1872px;height:1px;background:#cfcfcf;"></div><div class="a" style="left:157px;top:875px;width:1px;height:25px;background:#d4d4d4;"></div><div class="a" style="left:391px;top:875px;width:1px;height:25px;background:#d4d4d4;"></div><div class="a" style="left:497px;top:875px;width:1px;height:25px;background:#d4d4d4;"></div><div class="a" style="left:582px;top:875px;width:1px;height:25px;background:#d4d4d4;"></div><div class="a" style="left:688px;top:875px;width:1px;height:25px;background:#d4d4d4;"></div><div class="a" style="left:794px;top:875px;width:1px;height:25px;background:#d4d4d4;"></div><div class="a" style="left:900px;top:875px;width:1px;height:25px;background:#d4d4d4;"></div><div class="a" style="left:1006px;top:875px;width:1px;height:25px;background:#d4d4d4;"></div><div class="a" style="left:1240px;top:875px;width:1px;height:25px;background:#d4d4d4;"></div><div class="a" style="left:1346px;top:875px;width:1px;height:25px;background:#d4d4d4;"></div><div class="a" style="left:1452px;top:875px;width:1px;height:25px;background:#d4d4d4;"></div><div class="a" style="left:1569px;top:875px;width:1px;height:25px;background:#d4d4d4;"></div><svg class="a" style="left:24px;top:878px" width="20" height="20" viewBox="0 0 20 20"><path d="M3 1h9l4 4v13H3z" fill="#f8f8f8" stroke="#707070" stroke-width="1.3"/><path d="M12 1v4h4" fill="none" stroke="#707070" stroke-width="1"/><circle cx="15" cy="15" r="4.2" fill="#1a8ae0" stroke="#fff" stroke-width="0.8"/></svg><div class="t" style="left:48px;top:880px;font-size:15px;color:#000;letter-spacing:-0.3px;">313799778</div><div class="t" style="left:187px;top:880px;font-size:15px;color:#000;width:200.5px;text-align:right;letter-spacing:-0.5px;">2025.07.02 20:32:33</div><div class="t" style="left:293px;top:880px;font-size:15px;color:#000;width:200.5px;text-align:right;letter-spacing:-0.3px;">buy</div><div class="t" style="left:378px;top:880px;font-size:15px;color:#000;width:200.5px;text-align:right;letter-spacing:-0.3px;">0.10</div><div class="t" style="left:484px;top:880px;font-size:15px;color:#000;width:200.5px;text-align:right;letter-spacing:-0.3px;">gbpcad</div><div class="t" style="left:591px;top:880px;font-size:15px;color:#000;width:200.5px;text-align:right;letter-spacing:-0.3px;">1.85477</div><div class="t" style="left:697px;top:880px;font-size:15px;color:#000;width:200.5px;text-align:right;letter-spacing:-0.3px;">0.00000</div><div class="t" style="left:803px;top:880px;font-size:15px;color:#000;width:200.5px;text-align:right;letter-spacing:-0.3px;">0.00000</div><div class="t" style="left:1037px;top:880px;font-size:15px;color:#000;width:200.5px;text-align:right;letter-spacing:-0.5px;">2025.07.03 10:03:23</div><div class="t" style="left:1143px;top:880px;font-size:15px;color:#000;width:200.5px;text-align:right;letter-spacing:-0.3px;">1.85604</div><div class="t" style="left:1248px;top:880px;font-size:15px;color:#000;width:200.5px;text-align:right;letter-spacing:-0.3px;">-0.71</div><div class="t" style="left:1366px;top:880px;font-size:15px;color:#000;width:200.5px;text-align:right;letter-spacing:-0.3px;">9.34</div><div class="t" style="left:1687px;top:880px;font-size:15px;color:#000;width:200.9px;text-align:right;letter-spacing:-0.9px;">1046_2_0_2_0_0_1</div><div class="a" style="left:21px;top:900px;width:1872px;height:25px;background:#fff;"></div><div class="a" style="left:21px;top:925px;width:1872px;height:1px;background:#cfcfcf;"></div><div class="a" style="left:157px;top:900px;width:1px;height:25px;background:#d4d4d4;"></div><div class="a" style="left:391px;top:900px;width:1px;height:25px;background:#d4d4d4;"></div><div class="a" style="left:497px;top:900px;width:1px;height:25px;background:#d4d4d4;"></div><div class="a" style="left:582px;top:900px;width:1px;height:25px;background:#d4d4d4;"></div><div class="a" style="left:688px;top:900px;width:1px;height:25px;background:#d4d4d4;"></div><div class="a" style="left:794px;top:900px;width:1px;height:25px;background:#d4d4d4;"></div><div class="a" style="left:900px;top:900px;width:1px;height:25px;background:#d4d4d4;"></div><div class="a" style="left:1006px;top:900px;width:1px;height:25px;background:#d4d4d4;"></div><div class="a" style="left:1240px;top:900px;width:1px;height:25px;background:#d4d4d4;"></div><div class="a" style="left:1346px;top:900px;width:1px;height:25px;background:#d4d4d4;"></div><div class="a" style="left:1452px;top:900px;width:1px;height:25px;background:#d4d4d4;"></div><div class="a" style="left:1569px;top:900px;width:1px;height:25px;background:#d4d4d4;"></div><svg class="a" style="left:24px;top:903px" width="20" height="20" viewBox="0 0 20 20"><path d="M3 1h9l4 4v13H3z" fill="#f8f8f8" stroke="#707070" stroke-width="1.3"/><path d="M12 1v4h4" fill="none" stroke="#707070" stroke-width="1"/><circle cx="15" cy="15" r="4.2" fill="#1a8ae0" stroke="#fff" stroke-width="0.8"/></svg><div class="t" style="left:48px;top:905px;font-size:15px;color:#000;letter-spacing:-0.3px;">313799659</div><div class="t" style="left:187px;top:905px;font-size:15px;color:#000;width:200.5px;text-align:right;letter-spacing:-0.5px;">2025.07.02 20:24:16</div><div class="t" style="left:293px;top:905px;font-size:15px;color:#000;width:200.5px;text-align:right;letter-spacing:-0.3px;">buy</div><div class="t" style="left:378px;top:905px;font-size:15px;color:#000;width:200.5px;text-align:right;letter-spacing:-0.3px;">0.10</div><div class="t" style="left:484px;top:905px;font-size:15px;color:#000;width:200.5px;text-align:right;letter-spacing:-0.3px;">gbpcad</div><div class="t" style="left:591px;top:905px;font-size:15px;color:#000;width:200.5px;text-align:right;letter-spacing:-0.3px;">1.85425</div><div class="t" style="left:697px;top:905px;font-size:15px;color:#000;width:200.5px;text-align:right;letter-spacing:-0.3px;">0.00000</div><div class="t" style="left:803px;top:905px;font-size:15px;color:#000;width:200.5px;text-align:right;letter-spacing:-0.3px;">0.00000</div><div class="t" style="left:1037px;top:905px;font-size:15px;color:#000;width:200.5px;text-align:right;letter-spacing:-0.5px;">2025.07.03 10:03:21</div><div class="t" style="left:1143px;top:905px;font-size:15px;color:#000;width:200.5px;text-align:right;letter-spacing:-0.3px;">1.85597</div><div class="t" style="left:1248px;top:905px;font-size:15px;color:#000;width:200.5px;text-align:right;letter-spacing:-0.3px;">-0.71</div><div class="t" style="left:1366px;top:905px;font-size:15px;color:#000;width:200.5px;text-align:right;letter-spacing:-0.3px;">12.66</div><div class="t" style="left:1687px;top:905px;font-size:15px;color:#000;width:200.9px;text-align:right;letter-spacing:-0.9px;">1046_0_0_2_0_0_1</div><div class="a" style="left:21px;top:925px;width:1872px;height:25px;background:#ebebeb;"></div><div class="a" style="left:21px;top:950px;width:1872px;height:1px;background:#cfcfcf;"></div><div class="a" style="left:157px;top:925px;width:1px;height:25px;background:#d4d4d4;"></div><div class="a" style="left:391px;top:925px;width:1px;height:25px;background:#d4d4d4;"></div><div class="a" style="left:497px;top:925px;width:1px;height:25px;background:#d4d4d4;"></div><div class="a" style="left:582px;top:925px;width:1px;height:25px;background:#d4d4d4;"></div><div class="a" style="left:688px;top:925px;width:1px;height:25px;background:#d4d4d4;"></div><div class="a" style="left:794px;top:925px;width:1px;height:25px;background:#d4d4d4;"></div><div class="a" style="left:900px;top:925px;width:1px;height:25px;background:#d4d4d4;"></div><div class="a" style="left:1006px;top:925px;width:1px;height:25px;background:#d4d4d4;"></div><div class="a" style="left:1240px;top:925px;width:1px;height:25px;background:#d4d4d4;"></div><div class="a" style="left:1346px;top:925px;width:1px;height:25px;background:#d4d4d4;"></div><div class="a" style="left:1452px;top:925px;width:1px;height:25px;background:#d4d4d4;"></div><div class="a" style="left:1569px;top:925px;width:1px;height:25px;background:#d4d4d4;"></div><div class="a" style="left:902px;top:926px;width:104px;height:24px;background:#5ded5d;"></div><svg class="a" style="left:24px;top:928px" width="20" height="20" viewBox="0 0 20 20"><path d="M3 1h9l4 4v13H3z" fill="#f8f8f8" stroke="#707070" stroke-width="1.3"/><path d="M12 1v4h4" fill="none" stroke="#707070" stroke-width="1"/><circle cx="15" cy="15" r="4.2" fill="#1a8ae0" stroke="#fff" stroke-width="0.8"/></svg><div class="t" style="left:48px;top:930px;font-size:15px;color:#000;letter-spacing:-0.3px;">313796653</div><div class="t" style="left:187px;top:930px;font-size:15px;color:#000;width:200.5px;text-align:right;letter-spacing:-0.5px;">2025.07.02 18:20:47</div><div class="t" style="left:293px;top:930px;font-size:15px;color:#000;width:200.5px;text-align:right;letter-spacing:-0.3px;">buy</div><div class="t" style="left:378px;top:930px;font-size:15px;color:#000;width:200.5px;text-align:right;letter-spacing:-0.3px;">0.10</div><div class="t" style="left:484px;top:930px;font-size:15px;color:#000;width:200.5px;text-align:right;letter-spacing:-0.3px;">gbpcad</div><div class="t" style="left:591px;top:930px;font-size:15px;color:#000;width:200.5px;text-align:right;letter-spacing:-0.3px;">1.85597</div><div class="t" style="left:697px;top:930px;font-size:15px;color:#000;width:200.5px;text-align:right;letter-spacing:-0.3px;">0.00000</div><div class="t" style="left:803px;top:930px;font-size:15px;color:#000;width:200.5px;text-align:right;letter-spacing:-0.3px;">1.85630</div><div class="t" style="left:1037px;top:930px;font-size:15px;color:#000;width:200.5px;text-align:right;letter-spacing:-0.5px;">2025.07.03 00:44:17</div><div class="t" style="left:1143px;top:930px;font-size:15px;color:#000;width:200.5px;text-align:right;letter-spacing:-0.3px;">1.85632</div><div class="t" style="left:1248px;top:930px;font-size:15px;color:#000;width:200.5px;text-align:right;letter-spacing:-0.3px;">-0.71</div><div class="t" style="left:1366px;top:930px;font-size:15px;color:#000;width:200.5px;text-align:right;letter-spacing:-0.3px;">2.58</div><div class="t" style="left:1687px;top:930px;font-size:15px;color:#000;width:200.9px;text-align:right;letter-spacing:0.2px;">[tp]</div><div class="a" style="left:21px;top:950px;width:1872px;height:25px;background:#c8c8c8;"></div><svg class="a" style="left:27px;top:955px" width="14" height="14" viewBox="0 0 14 14"><circle cx="7" cy="7" r="5" fill="#bbb" stroke="#888" stroke-width="1.5"/><circle cx="7" cy="7" r="2.5" fill="#ddd"/></svg><div class="t" style="left:48px;top:954px;font-size:15px;color:#000;font-weight:bold;">Profit/Loss: 48.08  Credit: 0.00  Deposit: 0.00  Withdrawal: 0.00</div><div class="t" style="left:1366px;top:954px;font-size:15px;color:#000;width:200px;text-align:right;font-weight:bold;">48.08</div><div class="a" style="left:1892px;top:598px;width:22px;height:383px;background:#000;"></div><div class="a" style="left:1894px;top:600px;width:19px;height:19px;background:#fff;"></div><div class="a" style="left:1894px;top:621px;width:19px;height:337px;background:#fff;"></div><div class="a" style="left:1894px;top:960px;width:19px;height:19px;background:#fff;"></div><svg class="a" style="left:1897px;top:603px" width="13" height="10" viewBox="0 0 13 10"><path d="M1.5 8L6.5 3 11.5 8" fill="none" stroke="#000" stroke-width="1.6"/></svg><svg class="a" style="left:1897px;top:964px" width="13" height="10" viewBox="0 0 13 10"><path d="M1.5 2L6.5 7 11.5 2" fill="none" stroke="#000" stroke-width="1.6"/></svg><div class="a" style="left:1894px;top:889px;width:19px;height:2px;background:#000;"></div><div class="a" style="left:1899px;top:919px;width:9px;height:2px;background:#000;"></div><div class="a" style="left:1899px;top:923px;width:9px;height:2px;background:#000;"></div><div class="a" style="left:1899px;top:927px;width:9px;height:2px;background:#000;"></div><div class="a" style="left:21px;top:980px;width:150px;height:2px;background:#000;"></div><div class="a" style="left:300px;top:980px;width:1593px;height:2px;background:#000;"></div><div class="a" style="left:171px;top:980px;width:2px;height:25px;background:#000;"></div><div class="a" style="left:299px;top:980px;width:2px;height:25px;background:#000;"></div><div class="a" style="left:171px;top:1003px;width:130px;height:2px;background:#000;"></div><div class="t" style="left:36px;top:985px;font-size:15px;color:#000;">Trade</div><div class="t" style="left:99px;top:985px;font-size:15px;color:#000;">Exposure</div><div class="t" style="left:184px;top:985px;font-size:15px;color:#000;">Account History</div><div class="t" style="left:313px;top:985px;font-size:15px;color:#000;">News</div><div class="t" style="left:375px;top:985px;font-size:15px;color:#000;">Alerts</div><div class="t" style="left:438px;top:985px;font-size:15px;color:#000;">Mailbox</div><div class="t" style="left:534px;top:985px;font-size:15px;color:#000;">Market</div><div class="t" style="left:622px;top:985px;font-size:15px;color:#000;">Signals</div><div class="t" style="left:694px;top:985px;font-size:15px;color:#000;">Articles</div><div class="t" style="left:768px;top:985px;font-size:15px;color:#000;">Code Base</div><div class="t" style="left:863px;top:985px;font-size:15px;color:#000;">Experts</div><div class="t" style="left:935px;top:985px;font-size:15px;color:#000;">Journal</div><div class="a" style="left:86px;top:984px;width:1px;height:19px;background:#000;"></div><div class="a" style="left:362px;top:984px;width:1px;height:19px;background:#000;"></div><div class="a" style="left:425px;top:984px;width:1px;height:19px;background:#000;"></div><div class="a" style="left:521px;top:984px;width:1px;height:19px;background:#000;"></div><div class="a" style="left:609px;top:984px;width:1px;height:19px;background:#000;"></div><div class="a" style="left:681px;top:984px;width:1px;height:19px;background:#000;"></div><div class="a" style="left:755px;top:984px;width:1px;height:19px;background:#000;"></div><div class="a" style="left:850px;top:984px;width:1px;height:19px;background:#000;"></div><div class="a" style="left:923px;top:984px;width:1px;height:19px;background:#000;"></div><div class="a" style="left:996px;top:984px;width:1px;height:19px;background:#000;"></div><div class="t" style="left:495px;top:990px;font-size:13px;color:#d02020;font-weight:bold;">13</div><div class="t" style="left:583px;top:990px;font-size:13px;color:#d02020;font-weight:bold;">99</div><div class="a" style="left:0px;top:1012px;width:1920px;height:2px;background:#a8a8a8;"></div><div class="a" style="left:0px;top:1014px;width:1920px;height:28px;background:#fff;"></div><div class="t" style="left:2px;top:1022px;font-size:14.5px;color:#000;">For Help, press F1</div><div class="a" style="left:1047px;top:1017px;width:1px;height:23px;background:#808080;"></div><div class="a" style="left:1196px;top:1017px;width:1px;height:23px;background:#808080;"></div><div class="a" style="left:1327px;top:1017px;width:1px;height:23px;background:#808080;"></div><div class="a" style="left:1416px;top:1017px;width:1px;height:23px;background:#808080;"></div><div class="a" style="left:1505px;top:1017px;width:1px;height:23px;background:#808080;"></div><div class="a" style="left:1590px;top:1017px;width:1px;height:23px;background:#808080;"></div><div class="a" style="left:1677px;top:1017px;width:1px;height:23px;background:#808080;"></div><div class="a" style="left:1761px;top:1017px;width:1px;height:23px;background:#808080;"></div><div class="t" style="left:1053px;top:1022px;font-size:14.8px;color:#000;">RoboFX MT4Talk</div><div class="t" style="left:1202px;top:1022px;font-size:14.8px;color:#000;">2025.07.04 10:45</div><div class="t" style="left:1333px;top:1022px;font-size:14.8px;color:#000;">O: 1.85586</div><div class="t" style="left:1422px;top:1022px;font-size:14.8px;color:#000;">H: 1.85696</div><div class="t" style="left:1511px;top:1022px;font-size:14.8px;color:#000;">L: 1.85584</div><div class="t" style="left:1596px;top:1022px;font-size:14.8px;color:#000;">C: 1.85647</div><div class="t" style="left:1683px;top:1022px;font-size:14.8px;color:#000;">V: 445</div><div class="t" style="left:1804px;top:1022px;font-size:14.8px;color:#000;">1235113/591 kb</div><svg class="a" style="left:1767px;top:1020px" width="31" height="17" viewBox="0 0 31 17"><rect x="0" y="0" width="2.6" height="17" fill="#6a8a1a"/><rect x="0" y="15.0" width="2.6" height="2.0" fill="#1a4a6a"/><rect x="4" y="0" width="2.6" height="17" fill="#6a8a1a"/><rect x="4" y="13.3" width="2.6" height="3.7" fill="#1a4a6a"/><rect x="8" y="0" width="2.6" height="17" fill="#6a8a1a"/><rect x="8" y="11.6" width="2.6" height="5.4" fill="#1a4a6a"/><rect x="12" y="0" width="2.6" height="17" fill="#6a8a1a"/><rect x="12" y="9.9" width="2.6" height="7.1" fill="#1a4a6a"/><rect x="16" y="0" width="2.6" height="17" fill="#6a8a1a"/><rect x="16" y="8.2" width="2.6" height="8.8" fill="#1a4a6a"/><rect x="20" y="0" width="2.6" height="17" fill="#6a8a1a"/><rect x="20" y="6.5" width="2.6" height="10.5" fill="#1a4a6a"/><rect x="24" y="0" width="2.6" height="17" fill="#6a8a1a"/><rect x="24" y="4.800000000000001" width="2.6" height="12.2" fill="#1a4a6a"/><rect x="28" y="0" width="2.6" height="17" fill="#6a8a1a"/><rect x="28" y="3.0999999999999996" width="2.6" height="13.9" fill="#1a4a6a"/></svg><div class="a" style="left:0px;top:1042px;width:1920px;height:38px;background:#fff;"></div><div class="a" style="left:0px;top:1042px;width:1920px;height:1px;background:#000;"></div><div class="a" style="left:0px;top:1042px;width:45px;height:38px;background:#fff;border:1.5px solid #000;"></div><div class="a" style="left:45px;top:1042px;width:45px;height:38px;background:#fff;border:1.5px solid #000;"></div><div class="a" style="left:90px;top:1042px;width:46px;height:38px;background:#fff;border:1.5px solid #000;"></div><svg class="a" style="left:11px;top:1050px" width="22" height="22" viewBox="0 0 22 22"><path d="M0 3l9-1.3v8.8H0zM10.5 1.5L22 0v10.5H10.5zM0 11.5h9v8.8L0 19zM10.5 11.5H22V22l-11.5-1.6z" fill="#000"/></svg><svg class="a" style="left:56px;top:1050px" width="22" height="22" viewBox="0 0 22 22"><circle cx="13" cy="8.5" r="6.5" fill="none" stroke="#000" stroke-width="1.6"/><path d="M8.5 13L2 20" stroke="#000" stroke-width="1.8"/></svg><svg class="a" style="left:101px;top:1050px" width="22" height="22" viewBox="0 0 22 22"><path d="M1.5 5V1.5h13V5M1.5 17v3.5h13V17" fill="none" stroke="#000" stroke-width="1.2"/><rect x="1.5" y="6.5" width="13" height="9" fill="none" stroke="#000" stroke-width="1.2"/><path d="M19.5 1v20" stroke="#000" stroke-width="1.2"/><rect x="18" y="7" width="3" height="3" fill="#000"/></svg><div class="a" style="left:185px;top:1042px;width:44px;height:38px;background:#0000a0;"></div><div class="a" style="left:416px;top:1044px;width:43px;height:31px;background:#3a0070;"></div><svg class="a" style="left:150px;top:1051px" width="20" height="20" viewBox="0 0 20 20"><rect x="0" y="0" width="20" height="19" rx="3" fill="#1a1a1a"/><path d="M4 10a5 4 0 1 0 10 0a5 4 0 1 0 -10 0M12 8l6-3v10l-6-3" fill="none" stroke="#e02030" stroke-width="2.2"/></svg><div class="a" style="left:145px;top:1076px;width:33px;height:3px;background:#000;"></div><svg class="a" style="left:197px;top:1051px" width="20" height="20" viewBox="0 0 20 20"><path d="M1 3h7l2 2h9v13H1z" fill="#f5c842"/><rect x="5" y="10" width="10" height="8" fill="#3aa0e8"/><rect x="8" y="13" width="4" height="5" fill="#f5d870"/></svg><svg class="a" style="left:242px;top:1051px" width="20" height="20" viewBox="0 0 20 20"><circle cx="10" cy="10" r="9.5" fill="#dd4433"/><path d="M10 10L18.3 5.5A9.5 9.5 0 0 1 10 19.5z" fill="#f7c52a"/><path d="M10 10L10 19.5A9.5 9.5 0 0 1 1.7 5.5z" fill="#2a9a4a"/><circle cx="10" cy="10" r="4.5" fill="#fff"/><circle cx="10" cy="10" r="3.4" fill="#3a78e0"/></svg><div class="a" style="left:237px;top:1076px;width:33px;height:3px;background:#000;"></div><svg class="a" style="left:288px;top:1051px" width="20" height="20" viewBox="0 0 20 20"><rect x="0" y="0" width="20" height="19" fill="#f5d000"/><rect x="4" y="9" width="12" height="1" fill="#8a7a20"/></svg><div class="a" style="left:283px;top:1076px;width:33px;height:3px;background:#000;"></div><svg class="a" style="left:335px;top:1051px" width="20" height="20" viewBox="0 0 20 20"><rect x="0" y="0" width="20" height="20" rx="1" fill="#2a6ae8"/><text x="2" y="15" font-size="11" font-weight="bold" fill="#fff" font-family="Liberation Sans">JM</text></svg><div class="a" style="left:329px;top:1076px;width:33px;height:3px;background:#000;"></div><svg class="a" style="left:381px;top:1051px" width="20" height="20" viewBox="0 0 20 20"><rect x="0" y="0" width="20" height="20" rx="2" fill="#1f7a3a"/><text x="1" y="14" font-size="8.5" font-weight="bold" fill="#fff" font-family="Liberation Sans">FBS</text></svg><div class="a" style="left:375px;top:1076px;width:33px;height:3px;background:#000;"></div><svg class="a" style="left:427px;top:1051px" width="20" height="20" viewBox="0 0 20 20"><rect x="0" y="0" width="20" height="20" fill="#2a5ea8"/><path d="M4 4h9a3.5 3.5 0 0 1 0 7h-5v2h6v3H4V7h9v1H8" fill="none" stroke="#fff" stroke-width="2.4"/></svg><svg class="a" style="left:472px;top:1051px" width="20" height="20" viewBox="0 0 20 20"><circle cx="10" cy="10" r="9.5" fill="#6cc020"/><circle cx="8" cy="7" r="4" fill="#b8f070" opacity="0.7"/><text x="3" y="14" font-size="10" font-style="italic" font-weight="bold" fill="#fff" font-family="Liberation Sans">ff</text></svg><div class="a" style="left:467px;top:1076px;width:33px;height:3px;background:#000;"></div><svg class="a" style="left:519px;top:1051px" width="20" height="20" viewBox="0 0 20 20"><rect x="0" y="0" width="20" height="19" fill="#f5d000"/><rect x="4" y="9" width="12" height="1" fill="#8a7a20"/></svg><div class="a" style="left:512px;top:1076px;width:33px;height:3px;background:#000;"></div><div class="a" style="left:416px;top:1075px;width:43px;height:3px;background:#fff;"></div><div class="a" style="left:1612px;top:1042px;width:30px;height:38px;background:#3a0070;"></div><svg class="a" style="left:1619px;top:1052px" width="16" height="10" viewBox="0 0 16 10"><path d="M1 9L8 2l7 7" fill="none" stroke="#fff" stroke-width="1.5"/></svg><div class="a" style="left:1642px;top:1042px;width:30px;height:38px;background:#fff;border:1.5px solid #000;"></div><div class="a" style="left:1672px;top:1042px;width:30px;height:38px;background:#fff;border:1.5px solid #000;"></div><div class="a" style="left:1702px;top:1042px;width:30px;height:38px;background:#fff;border:1.5px solid #000;"></div><div class="a" style="left:1732px;top:1042px;width:45px;height:38px;background:#fff;border:1.5px solid #000;"></div><div class="a" style="left:1777px;top:1042px;width:51px;height:38px;background:#fff;border:1.5px solid #000;"></div><div class="a" style="left:1828px;top:1042px;width:50px;height:38px;background:#fff;border:1.5px solid #000;"></div><div class="a" style="left:1888px;top:1042px;width:34px;height:38px;background:#fff;border:1.5px solid #000;"></div><svg class="a" style="left:1647px;top:1050px" width="22" height="22" viewBox="0 0 22 22"><rect x="1" y="3" width="18" height="14" fill="#fff" stroke="#444" stroke-width="1.5"/><rect x="4" y="6" width="10" height="8" fill="#ccc" stroke="#666"/><circle cx="15" cy="16" r="5" fill="#e02020"/><path d="M15 13v3.5M15 18v1" stroke="#fff" stroke-width="1.6"/></svg><svg class="a" style="left:1676px;top:1050px" width="22" height="20" viewBox="0 0 22 20"><rect x="6" y="3" width="15" height="11" fill="none" stroke="#222" stroke-width="1.3"/><rect x="1" y="1" width="3" height="3" fill="none" stroke="#222"/><path d="M2.5 4v13h16M13 14v3" fill="none" stroke="#222" stroke-width="1.2"/></svg><svg class="a" style="left:1706px;top:1050px" width="22" height="20" viewBox="0 0 22 20"><path d="M2 7h3l5-4v14l-5-4H2z" fill="none" stroke="#222" stroke-width="1.3"/><circle cx="16" cy="14" r="5" fill="#e02020"/><path d="M13.5 11.5l5 5M18.5 11.5l-5 5" stroke="#fff" stroke-width="1.5"/></svg><div class="t" style="left:1741px;top:1054px;font-size:15px;color:#000;">ENG</div><div class="t" style="left:1786px;top:1054px;font-size:15px;color:#000;">14:48</div><svg class="a" style="left:1843px;top:1050px" width="20" height="22" viewBox="0 0 20 22"><path d="M1 1h18v15H12l-2 3-2-3H1z" fill="#000"/><path d="M4 5h12M4 8h12M4 11h8" stroke="#fff" stroke-width="1.3"/></svg><div class="a" style="left:1895px;top:1053px;width:20px;height:14px;background:#3aa8f0;"></div></body></html>
